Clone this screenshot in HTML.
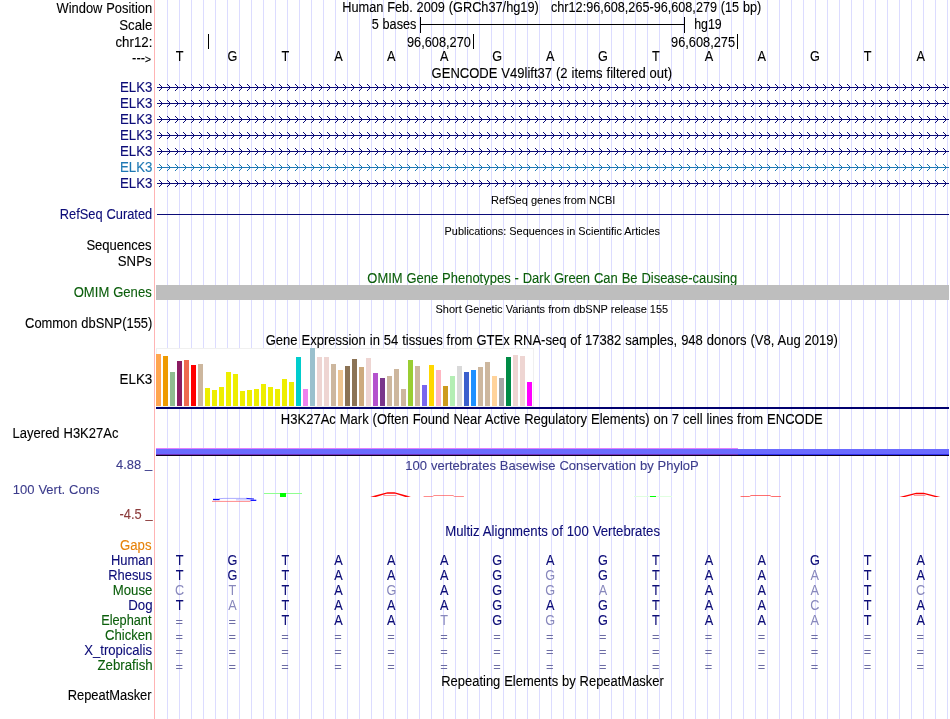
<!DOCTYPE html>
<html lang="en"><head><meta charset="utf-8"><title>UCSC Genome Browser - hg19 chr12:96,608,265-96,608,279</title>
<style>html,body{margin:0;padding:0;background:#fff;overflow:hidden;}svg{display:block;will-change:transform;}text{font-family:"Liberation Sans", Arial, Helvetica, sans-serif;font-size:13px;color:#000;fill:currentColor;stroke:currentColor;stroke-width:.1px;letter-spacing:0;word-spacing:0.3px;}.s{font-size:11px;letter-spacing:0;word-spacing:0;stroke-width:.06px;}.r{text-anchor:end;}.c{text-anchor:middle;}.nv{color:#0c0c78;}.gr{color:#0b5e0b;}.sb{color:#3c3c8c;}.dr{color:#8c3c3c;}.or{color:#e6820a;}.lt{color:#8888bc;stroke-width:0;}.eq{color:#6c6ca4;stroke-width:0;}</style></head><body>
<svg width="950" height="719" viewBox="0 0 950 719">
<rect width="950" height="719" fill="#fff"/>
<g shape-rendering="crispEdges"><rect x="154" y="0" width="1" height="719" fill="#ffb4b4"/><rect x="167" y="0" width="1" height="719" fill="#dcdcff"/><rect x="179" y="0" width="1" height="719" fill="#dcdcff"/><rect x="191" y="0" width="1" height="719" fill="#dcdcff"/><rect x="203" y="0" width="1" height="719" fill="#dcdcff"/><rect x="215" y="0" width="1" height="719" fill="#dcdcff"/><rect x="227" y="0" width="1" height="719" fill="#dcdcff"/><rect x="239" y="0" width="1" height="719" fill="#dcdcff"/><rect x="251" y="0" width="1" height="719" fill="#dcdcff"/><rect x="263" y="0" width="1" height="719" fill="#dcdcff"/><rect x="275" y="0" width="1" height="719" fill="#dcdcff"/><rect x="287" y="0" width="1" height="719" fill="#dcdcff"/><rect x="299" y="0" width="1" height="719" fill="#dcdcff"/><rect x="311" y="0" width="1" height="719" fill="#dcdcff"/><rect x="323" y="0" width="1" height="719" fill="#dcdcff"/><rect x="335" y="0" width="1" height="719" fill="#dcdcff"/><rect x="347" y="0" width="1" height="719" fill="#dcdcff"/><rect x="359" y="0" width="1" height="719" fill="#dcdcff"/><rect x="371" y="0" width="1" height="719" fill="#dcdcff"/><rect x="383" y="0" width="1" height="719" fill="#dcdcff"/><rect x="395" y="0" width="1" height="719" fill="#dcdcff"/><rect x="407" y="0" width="1" height="719" fill="#dcdcff"/><rect x="419" y="0" width="1" height="719" fill="#dcdcff"/><rect x="431" y="0" width="1" height="719" fill="#dcdcff"/><rect x="443" y="0" width="1" height="719" fill="#dcdcff"/><rect x="455" y="0" width="1" height="719" fill="#dcdcff"/><rect x="467" y="0" width="1" height="719" fill="#dcdcff"/><rect x="479" y="0" width="1" height="719" fill="#dcdcff"/><rect x="491" y="0" width="1" height="719" fill="#dcdcff"/><rect x="503" y="0" width="1" height="719" fill="#dcdcff"/><rect x="515" y="0" width="1" height="719" fill="#dcdcff"/><rect x="527" y="0" width="1" height="719" fill="#dcdcff"/><rect x="539" y="0" width="1" height="719" fill="#dcdcff"/><rect x="551" y="0" width="1" height="719" fill="#dcdcff"/><rect x="563" y="0" width="1" height="719" fill="#dcdcff"/><rect x="575" y="0" width="1" height="719" fill="#dcdcff"/><rect x="587" y="0" width="1" height="719" fill="#dcdcff"/><rect x="599" y="0" width="1" height="719" fill="#dcdcff"/><rect x="611" y="0" width="1" height="719" fill="#dcdcff"/><rect x="623" y="0" width="1" height="719" fill="#dcdcff"/><rect x="635" y="0" width="1" height="719" fill="#dcdcff"/><rect x="647" y="0" width="1" height="719" fill="#dcdcff"/><rect x="659" y="0" width="1" height="719" fill="#dcdcff"/><rect x="671" y="0" width="1" height="719" fill="#dcdcff"/><rect x="683" y="0" width="1" height="719" fill="#dcdcff"/><rect x="695" y="0" width="1" height="719" fill="#dcdcff"/><rect x="707" y="0" width="1" height="719" fill="#dcdcff"/><rect x="719" y="0" width="1" height="719" fill="#dcdcff"/><rect x="731" y="0" width="1" height="719" fill="#dcdcff"/><rect x="743" y="0" width="1" height="719" fill="#dcdcff"/><rect x="755" y="0" width="1" height="719" fill="#dcdcff"/><rect x="767" y="0" width="1" height="719" fill="#dcdcff"/><rect x="779" y="0" width="1" height="719" fill="#dcdcff"/><rect x="791" y="0" width="1" height="719" fill="#dcdcff"/><rect x="803" y="0" width="1" height="719" fill="#dcdcff"/><rect x="815" y="0" width="1" height="719" fill="#dcdcff"/><rect x="827" y="0" width="1" height="719" fill="#dcdcff"/><rect x="839" y="0" width="1" height="719" fill="#dcdcff"/><rect x="851" y="0" width="1" height="719" fill="#dcdcff"/><rect x="863" y="0" width="1" height="719" fill="#dcdcff"/><rect x="875" y="0" width="1" height="719" fill="#dcdcff"/><rect x="887" y="0" width="1" height="719" fill="#dcdcff"/><rect x="899" y="0" width="1" height="719" fill="#dcdcff"/><rect x="911" y="0" width="1" height="719" fill="#dcdcff"/><rect x="923" y="0" width="1" height="719" fill="#dcdcff"/><rect x="935" y="0" width="1" height="719" fill="#dcdcff"/><rect x="947" y="0" width="1" height="719" fill="#dcdcff"/></g>
<text transform="translate(152.17 13) scale(0.9928 1.06)" class="r">Window Position</text>
<text transform="translate(152.38 30) scale(1.0207 1.06)" class="r">Scale</text>
<text transform="translate(152.35 47) scale(1.0211 1.06)" class="r">chr12:</text>
<text transform="translate(151.05 63) scale(0.9912 1.06)" class="r">---<tspan font-size="10.5">&gt;</tspan></text>
<text transform="translate(152.43 92) scale(1.0219 1.06)" class="r nv">ELK3</text>
<text transform="translate(152.43 108) scale(1.0219 1.06)" class="r nv">ELK3</text>
<text transform="translate(152.43 124) scale(1.0219 1.06)" class="r nv">ELK3</text>
<text transform="translate(152.43 140) scale(1.0219 1.06)" class="r nv">ELK3</text>
<text transform="translate(152.43 156) scale(1.0219 1.06)" class="r nv">ELK3</text>
<text transform="translate(152.43 172) scale(1.0219 1.06)" class="r" style="color:#1e78b4">ELK3</text>
<text transform="translate(152.43 188) scale(1.0219 1.06)" class="r nv">ELK3</text>
<text transform="translate(152.21 219) scale(0.9886 1.06)" class="r nv">RefSeq Curated</text>
<text transform="translate(151.58 250) scale(1.0024 1.06)" class="r">Sequences</text>
<text transform="translate(151.58 266) scale(1.0168 1.06)" class="r">SNPs</text>
<text transform="translate(151.69 297) scale(1.0055 1.06)" class="r gr">OMIM Genes</text>
<text transform="translate(152.35 328) scale(0.9938 1.06)" class="r">Common dbSNP(155)</text>
<text transform="translate(152.32 384) scale(1.0311 1.06)" class="r">ELK3</text>
<text transform="translate(12.61 438) scale(1.0007 1.06)">Layered H3K27Ac</text>
<text transform="translate(152.28 469) scale(0.9944 1)" class="r sb">4.88 <tspan dy="-0.9">_</tspan></text>
<text transform="translate(12.79 494) scale(1.0001 1)" class="sb">100 Vert. Cons</text>
<text transform="translate(152.73 519.4) scale(0.9896 1.06)" class="r dr">-4.5 <tspan dy="-1.3">_</tspan></text>
<text transform="translate(151.48 550) scale(1.0144 1.06)" class="r or">Gaps</text>
<text transform="translate(152.73 565) scale(0.996 1.06)" class="r nv">Human</text>
<text transform="translate(152.0 580) scale(0.9938 1.06)" class="r nv">Rhesus</text>
<text transform="translate(152.35 595) scale(1.016 1.06)" class="r gr">Mouse</text>
<text transform="translate(152.53 610) scale(1.021 1.06)" class="r nv">Dog</text>
<text transform="translate(151.51 625) scale(0.9826 1.06)" class="r gr">Elephant</text>
<text transform="translate(152.35 640) scale(1.0095 1.06)" class="r gr">Chicken</text>
<text transform="translate(151.97 655) scale(1.0072 1.06)" class="r nv">X_tropicalis</text>
<text transform="translate(152.63 670) scale(1.0191 1.06)" class="r gr">Zebrafish</text>
<text transform="translate(151.58 700) scale(0.993 1.06)" class="r">RepeatMasker</text>
<text transform="translate(342.22 12) scale(0.9827 1.06)">Human Feb. 2009 (GRCh37/hg19)</text>
<text transform="translate(551.0 12) scale(0.9742 1.06)">chr12:96,608,265-96,608,279 (15 bp)</text>
<text transform="translate(551.79 78) scale(1.0027 1.06)" class="c">GENCODE V49lift37 (2 items filtered out)</text>
<text transform="translate(553.25 204) scale(1.003 1)" class="c s">RefSeq genes from NCBI</text>
<text transform="translate(552.32 235) scale(0.9908 1)" class="c s">Publications: Sequences in Scientific Articles</text>
<text transform="translate(552.28 283) scale(0.9981 1.06)" class="c gr">OMIM Gene Phenotypes - Dark Green Can Be Disease-causing</text>
<text transform="translate(551.79 313) scale(0.9986 1)" class="c s">Short Genetic Variants from dbSNP release 155</text>
<text transform="translate(551.79 345) scale(1.0018 1.06)" class="c">Gene Expression in 54 tissues from GTEx RNA-seq of 17382 samples, 948 donors (V8, Aug 2019)</text>
<text transform="translate(551.79 424) scale(1.0021 1.06)" class="c">H3K27Ac Mark (Often Found Near Active Regulatory Elements) on 7 cell lines from ENCODE</text>
<text transform="translate(552.04 470) scale(1.0002 1)" class="c sb">100 vertebrates Basewise Conservation by PhyloP</text>
<text transform="translate(552.6 536) scale(1.0125 1.06)" class="c nv">Multiz Alignments of 100 Vertebrates</text>
<text transform="translate(552.52 686) scale(0.9973 1.06)" class="c">Repeating Elements by RepeatMasker</text>
<text transform="translate(416.4 29.3) scale(0.976 1.06)" class="r">5 bases</text>
<g shape-rendering="crispEdges" fill="#000"><rect x="420" y="24" width="265" height="1"/><rect x="420" y="17" width="1" height="16"/><rect x="684" y="17" width="1" height="16"/></g>
<text transform="translate(694.2 29) scale(0.976 1.06)" textLength="28.18" lengthAdjust="spacingAndGlyphs">hg19</text>
<g shape-rendering="crispEdges" fill="#000"><rect x="208" y="34" width="1" height="15"/><rect x="473" y="34" width="1" height="15"/><rect x="737" y="34" width="1" height="15"/></g>
<text transform="translate(470.9 46.5) scale(0.976 1.06)" class="r" textLength="65.47" lengthAdjust="spacingAndGlyphs">96,608,270</text>
<text transform="translate(735 46.5) scale(0.976 1.06)" class="r" textLength="65.47" lengthAdjust="spacingAndGlyphs">96,608,275</text>
<text transform="translate(179.6 61) scale(0.976 1.06)" class="c">T</text>
<text transform="translate(232.5 61) scale(0.976 1.06)" class="c">G</text>
<text transform="translate(285.4 61) scale(0.976 1.06)" class="c">T</text>
<text transform="translate(338.4 61) scale(0.976 1.06)" class="c">A</text>
<text transform="translate(391.3 61) scale(0.976 1.06)" class="c">A</text>
<text transform="translate(444.2 61) scale(0.976 1.06)" class="c">A</text>
<text transform="translate(497.2 61) scale(0.976 1.06)" class="c">G</text>
<text transform="translate(550.1 61) scale(0.976 1.06)" class="c">A</text>
<text transform="translate(603.0 61) scale(0.976 1.06)" class="c">G</text>
<text transform="translate(656.0 61) scale(0.976 1.06)" class="c">T</text>
<text transform="translate(708.9 61) scale(0.976 1.06)" class="c">A</text>
<text transform="translate(761.8 61) scale(0.976 1.06)" class="c">A</text>
<text transform="translate(814.8 61) scale(0.976 1.06)" class="c">G</text>
<text transform="translate(867.7 61) scale(0.976 1.06)" class="c">T</text>
<text transform="translate(920.6 61) scale(0.976 1.06)" class="c">A</text>
<g shape-rendering="crispEdges"><rect x="157" y="87" width="792" height="1" fill="#0c0c78"/><path d="M161 86h1v1h-1zM161 88h1v1h-1zM160 85h1v1h-1zM160 89h1v1h-1zM159 84h1v1h-1zM159 90h1v1h-1zM169 86h1v1h-1zM169 88h1v1h-1zM168 85h1v1h-1zM168 89h1v1h-1zM167 84h1v1h-1zM167 90h1v1h-1zM177 86h1v1h-1zM177 88h1v1h-1zM176 85h1v1h-1zM176 89h1v1h-1zM175 84h1v1h-1zM175 90h1v1h-1zM185 86h1v1h-1zM185 88h1v1h-1zM184 85h1v1h-1zM184 89h1v1h-1zM183 84h1v1h-1zM183 90h1v1h-1zM193 86h1v1h-1zM193 88h1v1h-1zM192 85h1v1h-1zM192 89h1v1h-1zM191 84h1v1h-1zM191 90h1v1h-1zM201 86h1v1h-1zM201 88h1v1h-1zM200 85h1v1h-1zM200 89h1v1h-1zM199 84h1v1h-1zM199 90h1v1h-1zM209 86h1v1h-1zM209 88h1v1h-1zM208 85h1v1h-1zM208 89h1v1h-1zM207 84h1v1h-1zM207 90h1v1h-1zM217 86h1v1h-1zM217 88h1v1h-1zM216 85h1v1h-1zM216 89h1v1h-1zM215 84h1v1h-1zM215 90h1v1h-1zM225 86h1v1h-1zM225 88h1v1h-1zM224 85h1v1h-1zM224 89h1v1h-1zM223 84h1v1h-1zM223 90h1v1h-1zM233 86h1v1h-1zM233 88h1v1h-1zM232 85h1v1h-1zM232 89h1v1h-1zM231 84h1v1h-1zM231 90h1v1h-1zM241 86h1v1h-1zM241 88h1v1h-1zM240 85h1v1h-1zM240 89h1v1h-1zM239 84h1v1h-1zM239 90h1v1h-1zM249 86h1v1h-1zM249 88h1v1h-1zM248 85h1v1h-1zM248 89h1v1h-1zM247 84h1v1h-1zM247 90h1v1h-1zM257 86h1v1h-1zM257 88h1v1h-1zM256 85h1v1h-1zM256 89h1v1h-1zM255 84h1v1h-1zM255 90h1v1h-1zM265 86h1v1h-1zM265 88h1v1h-1zM264 85h1v1h-1zM264 89h1v1h-1zM263 84h1v1h-1zM263 90h1v1h-1zM273 86h1v1h-1zM273 88h1v1h-1zM272 85h1v1h-1zM272 89h1v1h-1zM271 84h1v1h-1zM271 90h1v1h-1zM281 86h1v1h-1zM281 88h1v1h-1zM280 85h1v1h-1zM280 89h1v1h-1zM279 84h1v1h-1zM279 90h1v1h-1zM289 86h1v1h-1zM289 88h1v1h-1zM288 85h1v1h-1zM288 89h1v1h-1zM287 84h1v1h-1zM287 90h1v1h-1zM297 86h1v1h-1zM297 88h1v1h-1zM296 85h1v1h-1zM296 89h1v1h-1zM295 84h1v1h-1zM295 90h1v1h-1zM305 86h1v1h-1zM305 88h1v1h-1zM304 85h1v1h-1zM304 89h1v1h-1zM303 84h1v1h-1zM303 90h1v1h-1zM313 86h1v1h-1zM313 88h1v1h-1zM312 85h1v1h-1zM312 89h1v1h-1zM311 84h1v1h-1zM311 90h1v1h-1zM321 86h1v1h-1zM321 88h1v1h-1zM320 85h1v1h-1zM320 89h1v1h-1zM319 84h1v1h-1zM319 90h1v1h-1zM329 86h1v1h-1zM329 88h1v1h-1zM328 85h1v1h-1zM328 89h1v1h-1zM327 84h1v1h-1zM327 90h1v1h-1zM337 86h1v1h-1zM337 88h1v1h-1zM336 85h1v1h-1zM336 89h1v1h-1zM335 84h1v1h-1zM335 90h1v1h-1zM345 86h1v1h-1zM345 88h1v1h-1zM344 85h1v1h-1zM344 89h1v1h-1zM343 84h1v1h-1zM343 90h1v1h-1zM353 86h1v1h-1zM353 88h1v1h-1zM352 85h1v1h-1zM352 89h1v1h-1zM351 84h1v1h-1zM351 90h1v1h-1zM361 86h1v1h-1zM361 88h1v1h-1zM360 85h1v1h-1zM360 89h1v1h-1zM359 84h1v1h-1zM359 90h1v1h-1zM369 86h1v1h-1zM369 88h1v1h-1zM368 85h1v1h-1zM368 89h1v1h-1zM367 84h1v1h-1zM367 90h1v1h-1zM377 86h1v1h-1zM377 88h1v1h-1zM376 85h1v1h-1zM376 89h1v1h-1zM375 84h1v1h-1zM375 90h1v1h-1zM385 86h1v1h-1zM385 88h1v1h-1zM384 85h1v1h-1zM384 89h1v1h-1zM383 84h1v1h-1zM383 90h1v1h-1zM393 86h1v1h-1zM393 88h1v1h-1zM392 85h1v1h-1zM392 89h1v1h-1zM391 84h1v1h-1zM391 90h1v1h-1zM401 86h1v1h-1zM401 88h1v1h-1zM400 85h1v1h-1zM400 89h1v1h-1zM399 84h1v1h-1zM399 90h1v1h-1zM409 86h1v1h-1zM409 88h1v1h-1zM408 85h1v1h-1zM408 89h1v1h-1zM407 84h1v1h-1zM407 90h1v1h-1zM417 86h1v1h-1zM417 88h1v1h-1zM416 85h1v1h-1zM416 89h1v1h-1zM415 84h1v1h-1zM415 90h1v1h-1zM425 86h1v1h-1zM425 88h1v1h-1zM424 85h1v1h-1zM424 89h1v1h-1zM423 84h1v1h-1zM423 90h1v1h-1zM433 86h1v1h-1zM433 88h1v1h-1zM432 85h1v1h-1zM432 89h1v1h-1zM431 84h1v1h-1zM431 90h1v1h-1zM441 86h1v1h-1zM441 88h1v1h-1zM440 85h1v1h-1zM440 89h1v1h-1zM439 84h1v1h-1zM439 90h1v1h-1zM449 86h1v1h-1zM449 88h1v1h-1zM448 85h1v1h-1zM448 89h1v1h-1zM447 84h1v1h-1zM447 90h1v1h-1zM457 86h1v1h-1zM457 88h1v1h-1zM456 85h1v1h-1zM456 89h1v1h-1zM455 84h1v1h-1zM455 90h1v1h-1zM465 86h1v1h-1zM465 88h1v1h-1zM464 85h1v1h-1zM464 89h1v1h-1zM463 84h1v1h-1zM463 90h1v1h-1zM473 86h1v1h-1zM473 88h1v1h-1zM472 85h1v1h-1zM472 89h1v1h-1zM471 84h1v1h-1zM471 90h1v1h-1zM481 86h1v1h-1zM481 88h1v1h-1zM480 85h1v1h-1zM480 89h1v1h-1zM479 84h1v1h-1zM479 90h1v1h-1zM489 86h1v1h-1zM489 88h1v1h-1zM488 85h1v1h-1zM488 89h1v1h-1zM487 84h1v1h-1zM487 90h1v1h-1zM497 86h1v1h-1zM497 88h1v1h-1zM496 85h1v1h-1zM496 89h1v1h-1zM495 84h1v1h-1zM495 90h1v1h-1zM505 86h1v1h-1zM505 88h1v1h-1zM504 85h1v1h-1zM504 89h1v1h-1zM503 84h1v1h-1zM503 90h1v1h-1zM513 86h1v1h-1zM513 88h1v1h-1zM512 85h1v1h-1zM512 89h1v1h-1zM511 84h1v1h-1zM511 90h1v1h-1zM521 86h1v1h-1zM521 88h1v1h-1zM520 85h1v1h-1zM520 89h1v1h-1zM519 84h1v1h-1zM519 90h1v1h-1zM529 86h1v1h-1zM529 88h1v1h-1zM528 85h1v1h-1zM528 89h1v1h-1zM527 84h1v1h-1zM527 90h1v1h-1zM537 86h1v1h-1zM537 88h1v1h-1zM536 85h1v1h-1zM536 89h1v1h-1zM535 84h1v1h-1zM535 90h1v1h-1zM545 86h1v1h-1zM545 88h1v1h-1zM544 85h1v1h-1zM544 89h1v1h-1zM543 84h1v1h-1zM543 90h1v1h-1zM553 86h1v1h-1zM553 88h1v1h-1zM552 85h1v1h-1zM552 89h1v1h-1zM551 84h1v1h-1zM551 90h1v1h-1zM561 86h1v1h-1zM561 88h1v1h-1zM560 85h1v1h-1zM560 89h1v1h-1zM559 84h1v1h-1zM559 90h1v1h-1zM569 86h1v1h-1zM569 88h1v1h-1zM568 85h1v1h-1zM568 89h1v1h-1zM567 84h1v1h-1zM567 90h1v1h-1zM577 86h1v1h-1zM577 88h1v1h-1zM576 85h1v1h-1zM576 89h1v1h-1zM575 84h1v1h-1zM575 90h1v1h-1zM585 86h1v1h-1zM585 88h1v1h-1zM584 85h1v1h-1zM584 89h1v1h-1zM583 84h1v1h-1zM583 90h1v1h-1zM593 86h1v1h-1zM593 88h1v1h-1zM592 85h1v1h-1zM592 89h1v1h-1zM591 84h1v1h-1zM591 90h1v1h-1zM601 86h1v1h-1zM601 88h1v1h-1zM600 85h1v1h-1zM600 89h1v1h-1zM599 84h1v1h-1zM599 90h1v1h-1zM609 86h1v1h-1zM609 88h1v1h-1zM608 85h1v1h-1zM608 89h1v1h-1zM607 84h1v1h-1zM607 90h1v1h-1zM617 86h1v1h-1zM617 88h1v1h-1zM616 85h1v1h-1zM616 89h1v1h-1zM615 84h1v1h-1zM615 90h1v1h-1zM625 86h1v1h-1zM625 88h1v1h-1zM624 85h1v1h-1zM624 89h1v1h-1zM623 84h1v1h-1zM623 90h1v1h-1zM633 86h1v1h-1zM633 88h1v1h-1zM632 85h1v1h-1zM632 89h1v1h-1zM631 84h1v1h-1zM631 90h1v1h-1zM641 86h1v1h-1zM641 88h1v1h-1zM640 85h1v1h-1zM640 89h1v1h-1zM639 84h1v1h-1zM639 90h1v1h-1zM649 86h1v1h-1zM649 88h1v1h-1zM648 85h1v1h-1zM648 89h1v1h-1zM647 84h1v1h-1zM647 90h1v1h-1zM657 86h1v1h-1zM657 88h1v1h-1zM656 85h1v1h-1zM656 89h1v1h-1zM655 84h1v1h-1zM655 90h1v1h-1zM665 86h1v1h-1zM665 88h1v1h-1zM664 85h1v1h-1zM664 89h1v1h-1zM663 84h1v1h-1zM663 90h1v1h-1zM673 86h1v1h-1zM673 88h1v1h-1zM672 85h1v1h-1zM672 89h1v1h-1zM671 84h1v1h-1zM671 90h1v1h-1zM681 86h1v1h-1zM681 88h1v1h-1zM680 85h1v1h-1zM680 89h1v1h-1zM679 84h1v1h-1zM679 90h1v1h-1zM689 86h1v1h-1zM689 88h1v1h-1zM688 85h1v1h-1zM688 89h1v1h-1zM687 84h1v1h-1zM687 90h1v1h-1zM697 86h1v1h-1zM697 88h1v1h-1zM696 85h1v1h-1zM696 89h1v1h-1zM695 84h1v1h-1zM695 90h1v1h-1zM705 86h1v1h-1zM705 88h1v1h-1zM704 85h1v1h-1zM704 89h1v1h-1zM703 84h1v1h-1zM703 90h1v1h-1zM713 86h1v1h-1zM713 88h1v1h-1zM712 85h1v1h-1zM712 89h1v1h-1zM711 84h1v1h-1zM711 90h1v1h-1zM721 86h1v1h-1zM721 88h1v1h-1zM720 85h1v1h-1zM720 89h1v1h-1zM719 84h1v1h-1zM719 90h1v1h-1zM729 86h1v1h-1zM729 88h1v1h-1zM728 85h1v1h-1zM728 89h1v1h-1zM727 84h1v1h-1zM727 90h1v1h-1zM737 86h1v1h-1zM737 88h1v1h-1zM736 85h1v1h-1zM736 89h1v1h-1zM735 84h1v1h-1zM735 90h1v1h-1zM745 86h1v1h-1zM745 88h1v1h-1zM744 85h1v1h-1zM744 89h1v1h-1zM743 84h1v1h-1zM743 90h1v1h-1zM753 86h1v1h-1zM753 88h1v1h-1zM752 85h1v1h-1zM752 89h1v1h-1zM751 84h1v1h-1zM751 90h1v1h-1zM761 86h1v1h-1zM761 88h1v1h-1zM760 85h1v1h-1zM760 89h1v1h-1zM759 84h1v1h-1zM759 90h1v1h-1zM769 86h1v1h-1zM769 88h1v1h-1zM768 85h1v1h-1zM768 89h1v1h-1zM767 84h1v1h-1zM767 90h1v1h-1zM777 86h1v1h-1zM777 88h1v1h-1zM776 85h1v1h-1zM776 89h1v1h-1zM775 84h1v1h-1zM775 90h1v1h-1zM785 86h1v1h-1zM785 88h1v1h-1zM784 85h1v1h-1zM784 89h1v1h-1zM783 84h1v1h-1zM783 90h1v1h-1zM793 86h1v1h-1zM793 88h1v1h-1zM792 85h1v1h-1zM792 89h1v1h-1zM791 84h1v1h-1zM791 90h1v1h-1zM801 86h1v1h-1zM801 88h1v1h-1zM800 85h1v1h-1zM800 89h1v1h-1zM799 84h1v1h-1zM799 90h1v1h-1zM809 86h1v1h-1zM809 88h1v1h-1zM808 85h1v1h-1zM808 89h1v1h-1zM807 84h1v1h-1zM807 90h1v1h-1zM817 86h1v1h-1zM817 88h1v1h-1zM816 85h1v1h-1zM816 89h1v1h-1zM815 84h1v1h-1zM815 90h1v1h-1zM825 86h1v1h-1zM825 88h1v1h-1zM824 85h1v1h-1zM824 89h1v1h-1zM823 84h1v1h-1zM823 90h1v1h-1zM833 86h1v1h-1zM833 88h1v1h-1zM832 85h1v1h-1zM832 89h1v1h-1zM831 84h1v1h-1zM831 90h1v1h-1zM841 86h1v1h-1zM841 88h1v1h-1zM840 85h1v1h-1zM840 89h1v1h-1zM839 84h1v1h-1zM839 90h1v1h-1zM849 86h1v1h-1zM849 88h1v1h-1zM848 85h1v1h-1zM848 89h1v1h-1zM847 84h1v1h-1zM847 90h1v1h-1zM857 86h1v1h-1zM857 88h1v1h-1zM856 85h1v1h-1zM856 89h1v1h-1zM855 84h1v1h-1zM855 90h1v1h-1zM865 86h1v1h-1zM865 88h1v1h-1zM864 85h1v1h-1zM864 89h1v1h-1zM863 84h1v1h-1zM863 90h1v1h-1zM873 86h1v1h-1zM873 88h1v1h-1zM872 85h1v1h-1zM872 89h1v1h-1zM871 84h1v1h-1zM871 90h1v1h-1zM881 86h1v1h-1zM881 88h1v1h-1zM880 85h1v1h-1zM880 89h1v1h-1zM879 84h1v1h-1zM879 90h1v1h-1zM889 86h1v1h-1zM889 88h1v1h-1zM888 85h1v1h-1zM888 89h1v1h-1zM887 84h1v1h-1zM887 90h1v1h-1zM897 86h1v1h-1zM897 88h1v1h-1zM896 85h1v1h-1zM896 89h1v1h-1zM895 84h1v1h-1zM895 90h1v1h-1zM905 86h1v1h-1zM905 88h1v1h-1zM904 85h1v1h-1zM904 89h1v1h-1zM903 84h1v1h-1zM903 90h1v1h-1zM913 86h1v1h-1zM913 88h1v1h-1zM912 85h1v1h-1zM912 89h1v1h-1zM911 84h1v1h-1zM911 90h1v1h-1zM921 86h1v1h-1zM921 88h1v1h-1zM920 85h1v1h-1zM920 89h1v1h-1zM919 84h1v1h-1zM919 90h1v1h-1zM929 86h1v1h-1zM929 88h1v1h-1zM928 85h1v1h-1zM928 89h1v1h-1zM927 84h1v1h-1zM927 90h1v1h-1zM937 86h1v1h-1zM937 88h1v1h-1zM936 85h1v1h-1zM936 89h1v1h-1zM935 84h1v1h-1zM935 90h1v1h-1zM945 86h1v1h-1zM945 88h1v1h-1zM944 85h1v1h-1zM944 89h1v1h-1zM943 84h1v1h-1zM943 90h1v1h-1z" fill="#0c0c78"/><rect x="157" y="103" width="792" height="1" fill="#0c0c78"/><path d="M161 102h1v1h-1zM161 104h1v1h-1zM160 101h1v1h-1zM160 105h1v1h-1zM159 100h1v1h-1zM159 106h1v1h-1zM169 102h1v1h-1zM169 104h1v1h-1zM168 101h1v1h-1zM168 105h1v1h-1zM167 100h1v1h-1zM167 106h1v1h-1zM177 102h1v1h-1zM177 104h1v1h-1zM176 101h1v1h-1zM176 105h1v1h-1zM175 100h1v1h-1zM175 106h1v1h-1zM185 102h1v1h-1zM185 104h1v1h-1zM184 101h1v1h-1zM184 105h1v1h-1zM183 100h1v1h-1zM183 106h1v1h-1zM193 102h1v1h-1zM193 104h1v1h-1zM192 101h1v1h-1zM192 105h1v1h-1zM191 100h1v1h-1zM191 106h1v1h-1zM201 102h1v1h-1zM201 104h1v1h-1zM200 101h1v1h-1zM200 105h1v1h-1zM199 100h1v1h-1zM199 106h1v1h-1zM209 102h1v1h-1zM209 104h1v1h-1zM208 101h1v1h-1zM208 105h1v1h-1zM207 100h1v1h-1zM207 106h1v1h-1zM217 102h1v1h-1zM217 104h1v1h-1zM216 101h1v1h-1zM216 105h1v1h-1zM215 100h1v1h-1zM215 106h1v1h-1zM225 102h1v1h-1zM225 104h1v1h-1zM224 101h1v1h-1zM224 105h1v1h-1zM223 100h1v1h-1zM223 106h1v1h-1zM233 102h1v1h-1zM233 104h1v1h-1zM232 101h1v1h-1zM232 105h1v1h-1zM231 100h1v1h-1zM231 106h1v1h-1zM241 102h1v1h-1zM241 104h1v1h-1zM240 101h1v1h-1zM240 105h1v1h-1zM239 100h1v1h-1zM239 106h1v1h-1zM249 102h1v1h-1zM249 104h1v1h-1zM248 101h1v1h-1zM248 105h1v1h-1zM247 100h1v1h-1zM247 106h1v1h-1zM257 102h1v1h-1zM257 104h1v1h-1zM256 101h1v1h-1zM256 105h1v1h-1zM255 100h1v1h-1zM255 106h1v1h-1zM265 102h1v1h-1zM265 104h1v1h-1zM264 101h1v1h-1zM264 105h1v1h-1zM263 100h1v1h-1zM263 106h1v1h-1zM273 102h1v1h-1zM273 104h1v1h-1zM272 101h1v1h-1zM272 105h1v1h-1zM271 100h1v1h-1zM271 106h1v1h-1zM281 102h1v1h-1zM281 104h1v1h-1zM280 101h1v1h-1zM280 105h1v1h-1zM279 100h1v1h-1zM279 106h1v1h-1zM289 102h1v1h-1zM289 104h1v1h-1zM288 101h1v1h-1zM288 105h1v1h-1zM287 100h1v1h-1zM287 106h1v1h-1zM297 102h1v1h-1zM297 104h1v1h-1zM296 101h1v1h-1zM296 105h1v1h-1zM295 100h1v1h-1zM295 106h1v1h-1zM305 102h1v1h-1zM305 104h1v1h-1zM304 101h1v1h-1zM304 105h1v1h-1zM303 100h1v1h-1zM303 106h1v1h-1zM313 102h1v1h-1zM313 104h1v1h-1zM312 101h1v1h-1zM312 105h1v1h-1zM311 100h1v1h-1zM311 106h1v1h-1zM321 102h1v1h-1zM321 104h1v1h-1zM320 101h1v1h-1zM320 105h1v1h-1zM319 100h1v1h-1zM319 106h1v1h-1zM329 102h1v1h-1zM329 104h1v1h-1zM328 101h1v1h-1zM328 105h1v1h-1zM327 100h1v1h-1zM327 106h1v1h-1zM337 102h1v1h-1zM337 104h1v1h-1zM336 101h1v1h-1zM336 105h1v1h-1zM335 100h1v1h-1zM335 106h1v1h-1zM345 102h1v1h-1zM345 104h1v1h-1zM344 101h1v1h-1zM344 105h1v1h-1zM343 100h1v1h-1zM343 106h1v1h-1zM353 102h1v1h-1zM353 104h1v1h-1zM352 101h1v1h-1zM352 105h1v1h-1zM351 100h1v1h-1zM351 106h1v1h-1zM361 102h1v1h-1zM361 104h1v1h-1zM360 101h1v1h-1zM360 105h1v1h-1zM359 100h1v1h-1zM359 106h1v1h-1zM369 102h1v1h-1zM369 104h1v1h-1zM368 101h1v1h-1zM368 105h1v1h-1zM367 100h1v1h-1zM367 106h1v1h-1zM377 102h1v1h-1zM377 104h1v1h-1zM376 101h1v1h-1zM376 105h1v1h-1zM375 100h1v1h-1zM375 106h1v1h-1zM385 102h1v1h-1zM385 104h1v1h-1zM384 101h1v1h-1zM384 105h1v1h-1zM383 100h1v1h-1zM383 106h1v1h-1zM393 102h1v1h-1zM393 104h1v1h-1zM392 101h1v1h-1zM392 105h1v1h-1zM391 100h1v1h-1zM391 106h1v1h-1zM401 102h1v1h-1zM401 104h1v1h-1zM400 101h1v1h-1zM400 105h1v1h-1zM399 100h1v1h-1zM399 106h1v1h-1zM409 102h1v1h-1zM409 104h1v1h-1zM408 101h1v1h-1zM408 105h1v1h-1zM407 100h1v1h-1zM407 106h1v1h-1zM417 102h1v1h-1zM417 104h1v1h-1zM416 101h1v1h-1zM416 105h1v1h-1zM415 100h1v1h-1zM415 106h1v1h-1zM425 102h1v1h-1zM425 104h1v1h-1zM424 101h1v1h-1zM424 105h1v1h-1zM423 100h1v1h-1zM423 106h1v1h-1zM433 102h1v1h-1zM433 104h1v1h-1zM432 101h1v1h-1zM432 105h1v1h-1zM431 100h1v1h-1zM431 106h1v1h-1zM441 102h1v1h-1zM441 104h1v1h-1zM440 101h1v1h-1zM440 105h1v1h-1zM439 100h1v1h-1zM439 106h1v1h-1zM449 102h1v1h-1zM449 104h1v1h-1zM448 101h1v1h-1zM448 105h1v1h-1zM447 100h1v1h-1zM447 106h1v1h-1zM457 102h1v1h-1zM457 104h1v1h-1zM456 101h1v1h-1zM456 105h1v1h-1zM455 100h1v1h-1zM455 106h1v1h-1zM465 102h1v1h-1zM465 104h1v1h-1zM464 101h1v1h-1zM464 105h1v1h-1zM463 100h1v1h-1zM463 106h1v1h-1zM473 102h1v1h-1zM473 104h1v1h-1zM472 101h1v1h-1zM472 105h1v1h-1zM471 100h1v1h-1zM471 106h1v1h-1zM481 102h1v1h-1zM481 104h1v1h-1zM480 101h1v1h-1zM480 105h1v1h-1zM479 100h1v1h-1zM479 106h1v1h-1zM489 102h1v1h-1zM489 104h1v1h-1zM488 101h1v1h-1zM488 105h1v1h-1zM487 100h1v1h-1zM487 106h1v1h-1zM497 102h1v1h-1zM497 104h1v1h-1zM496 101h1v1h-1zM496 105h1v1h-1zM495 100h1v1h-1zM495 106h1v1h-1zM505 102h1v1h-1zM505 104h1v1h-1zM504 101h1v1h-1zM504 105h1v1h-1zM503 100h1v1h-1zM503 106h1v1h-1zM513 102h1v1h-1zM513 104h1v1h-1zM512 101h1v1h-1zM512 105h1v1h-1zM511 100h1v1h-1zM511 106h1v1h-1zM521 102h1v1h-1zM521 104h1v1h-1zM520 101h1v1h-1zM520 105h1v1h-1zM519 100h1v1h-1zM519 106h1v1h-1zM529 102h1v1h-1zM529 104h1v1h-1zM528 101h1v1h-1zM528 105h1v1h-1zM527 100h1v1h-1zM527 106h1v1h-1zM537 102h1v1h-1zM537 104h1v1h-1zM536 101h1v1h-1zM536 105h1v1h-1zM535 100h1v1h-1zM535 106h1v1h-1zM545 102h1v1h-1zM545 104h1v1h-1zM544 101h1v1h-1zM544 105h1v1h-1zM543 100h1v1h-1zM543 106h1v1h-1zM553 102h1v1h-1zM553 104h1v1h-1zM552 101h1v1h-1zM552 105h1v1h-1zM551 100h1v1h-1zM551 106h1v1h-1zM561 102h1v1h-1zM561 104h1v1h-1zM560 101h1v1h-1zM560 105h1v1h-1zM559 100h1v1h-1zM559 106h1v1h-1zM569 102h1v1h-1zM569 104h1v1h-1zM568 101h1v1h-1zM568 105h1v1h-1zM567 100h1v1h-1zM567 106h1v1h-1zM577 102h1v1h-1zM577 104h1v1h-1zM576 101h1v1h-1zM576 105h1v1h-1zM575 100h1v1h-1zM575 106h1v1h-1zM585 102h1v1h-1zM585 104h1v1h-1zM584 101h1v1h-1zM584 105h1v1h-1zM583 100h1v1h-1zM583 106h1v1h-1zM593 102h1v1h-1zM593 104h1v1h-1zM592 101h1v1h-1zM592 105h1v1h-1zM591 100h1v1h-1zM591 106h1v1h-1zM601 102h1v1h-1zM601 104h1v1h-1zM600 101h1v1h-1zM600 105h1v1h-1zM599 100h1v1h-1zM599 106h1v1h-1zM609 102h1v1h-1zM609 104h1v1h-1zM608 101h1v1h-1zM608 105h1v1h-1zM607 100h1v1h-1zM607 106h1v1h-1zM617 102h1v1h-1zM617 104h1v1h-1zM616 101h1v1h-1zM616 105h1v1h-1zM615 100h1v1h-1zM615 106h1v1h-1zM625 102h1v1h-1zM625 104h1v1h-1zM624 101h1v1h-1zM624 105h1v1h-1zM623 100h1v1h-1zM623 106h1v1h-1zM633 102h1v1h-1zM633 104h1v1h-1zM632 101h1v1h-1zM632 105h1v1h-1zM631 100h1v1h-1zM631 106h1v1h-1zM641 102h1v1h-1zM641 104h1v1h-1zM640 101h1v1h-1zM640 105h1v1h-1zM639 100h1v1h-1zM639 106h1v1h-1zM649 102h1v1h-1zM649 104h1v1h-1zM648 101h1v1h-1zM648 105h1v1h-1zM647 100h1v1h-1zM647 106h1v1h-1zM657 102h1v1h-1zM657 104h1v1h-1zM656 101h1v1h-1zM656 105h1v1h-1zM655 100h1v1h-1zM655 106h1v1h-1zM665 102h1v1h-1zM665 104h1v1h-1zM664 101h1v1h-1zM664 105h1v1h-1zM663 100h1v1h-1zM663 106h1v1h-1zM673 102h1v1h-1zM673 104h1v1h-1zM672 101h1v1h-1zM672 105h1v1h-1zM671 100h1v1h-1zM671 106h1v1h-1zM681 102h1v1h-1zM681 104h1v1h-1zM680 101h1v1h-1zM680 105h1v1h-1zM679 100h1v1h-1zM679 106h1v1h-1zM689 102h1v1h-1zM689 104h1v1h-1zM688 101h1v1h-1zM688 105h1v1h-1zM687 100h1v1h-1zM687 106h1v1h-1zM697 102h1v1h-1zM697 104h1v1h-1zM696 101h1v1h-1zM696 105h1v1h-1zM695 100h1v1h-1zM695 106h1v1h-1zM705 102h1v1h-1zM705 104h1v1h-1zM704 101h1v1h-1zM704 105h1v1h-1zM703 100h1v1h-1zM703 106h1v1h-1zM713 102h1v1h-1zM713 104h1v1h-1zM712 101h1v1h-1zM712 105h1v1h-1zM711 100h1v1h-1zM711 106h1v1h-1zM721 102h1v1h-1zM721 104h1v1h-1zM720 101h1v1h-1zM720 105h1v1h-1zM719 100h1v1h-1zM719 106h1v1h-1zM729 102h1v1h-1zM729 104h1v1h-1zM728 101h1v1h-1zM728 105h1v1h-1zM727 100h1v1h-1zM727 106h1v1h-1zM737 102h1v1h-1zM737 104h1v1h-1zM736 101h1v1h-1zM736 105h1v1h-1zM735 100h1v1h-1zM735 106h1v1h-1zM745 102h1v1h-1zM745 104h1v1h-1zM744 101h1v1h-1zM744 105h1v1h-1zM743 100h1v1h-1zM743 106h1v1h-1zM753 102h1v1h-1zM753 104h1v1h-1zM752 101h1v1h-1zM752 105h1v1h-1zM751 100h1v1h-1zM751 106h1v1h-1zM761 102h1v1h-1zM761 104h1v1h-1zM760 101h1v1h-1zM760 105h1v1h-1zM759 100h1v1h-1zM759 106h1v1h-1zM769 102h1v1h-1zM769 104h1v1h-1zM768 101h1v1h-1zM768 105h1v1h-1zM767 100h1v1h-1zM767 106h1v1h-1zM777 102h1v1h-1zM777 104h1v1h-1zM776 101h1v1h-1zM776 105h1v1h-1zM775 100h1v1h-1zM775 106h1v1h-1zM785 102h1v1h-1zM785 104h1v1h-1zM784 101h1v1h-1zM784 105h1v1h-1zM783 100h1v1h-1zM783 106h1v1h-1zM793 102h1v1h-1zM793 104h1v1h-1zM792 101h1v1h-1zM792 105h1v1h-1zM791 100h1v1h-1zM791 106h1v1h-1zM801 102h1v1h-1zM801 104h1v1h-1zM800 101h1v1h-1zM800 105h1v1h-1zM799 100h1v1h-1zM799 106h1v1h-1zM809 102h1v1h-1zM809 104h1v1h-1zM808 101h1v1h-1zM808 105h1v1h-1zM807 100h1v1h-1zM807 106h1v1h-1zM817 102h1v1h-1zM817 104h1v1h-1zM816 101h1v1h-1zM816 105h1v1h-1zM815 100h1v1h-1zM815 106h1v1h-1zM825 102h1v1h-1zM825 104h1v1h-1zM824 101h1v1h-1zM824 105h1v1h-1zM823 100h1v1h-1zM823 106h1v1h-1zM833 102h1v1h-1zM833 104h1v1h-1zM832 101h1v1h-1zM832 105h1v1h-1zM831 100h1v1h-1zM831 106h1v1h-1zM841 102h1v1h-1zM841 104h1v1h-1zM840 101h1v1h-1zM840 105h1v1h-1zM839 100h1v1h-1zM839 106h1v1h-1zM849 102h1v1h-1zM849 104h1v1h-1zM848 101h1v1h-1zM848 105h1v1h-1zM847 100h1v1h-1zM847 106h1v1h-1zM857 102h1v1h-1zM857 104h1v1h-1zM856 101h1v1h-1zM856 105h1v1h-1zM855 100h1v1h-1zM855 106h1v1h-1zM865 102h1v1h-1zM865 104h1v1h-1zM864 101h1v1h-1zM864 105h1v1h-1zM863 100h1v1h-1zM863 106h1v1h-1zM873 102h1v1h-1zM873 104h1v1h-1zM872 101h1v1h-1zM872 105h1v1h-1zM871 100h1v1h-1zM871 106h1v1h-1zM881 102h1v1h-1zM881 104h1v1h-1zM880 101h1v1h-1zM880 105h1v1h-1zM879 100h1v1h-1zM879 106h1v1h-1zM889 102h1v1h-1zM889 104h1v1h-1zM888 101h1v1h-1zM888 105h1v1h-1zM887 100h1v1h-1zM887 106h1v1h-1zM897 102h1v1h-1zM897 104h1v1h-1zM896 101h1v1h-1zM896 105h1v1h-1zM895 100h1v1h-1zM895 106h1v1h-1zM905 102h1v1h-1zM905 104h1v1h-1zM904 101h1v1h-1zM904 105h1v1h-1zM903 100h1v1h-1zM903 106h1v1h-1zM913 102h1v1h-1zM913 104h1v1h-1zM912 101h1v1h-1zM912 105h1v1h-1zM911 100h1v1h-1zM911 106h1v1h-1zM921 102h1v1h-1zM921 104h1v1h-1zM920 101h1v1h-1zM920 105h1v1h-1zM919 100h1v1h-1zM919 106h1v1h-1zM929 102h1v1h-1zM929 104h1v1h-1zM928 101h1v1h-1zM928 105h1v1h-1zM927 100h1v1h-1zM927 106h1v1h-1zM937 102h1v1h-1zM937 104h1v1h-1zM936 101h1v1h-1zM936 105h1v1h-1zM935 100h1v1h-1zM935 106h1v1h-1zM945 102h1v1h-1zM945 104h1v1h-1zM944 101h1v1h-1zM944 105h1v1h-1zM943 100h1v1h-1zM943 106h1v1h-1z" fill="#0c0c78"/><rect x="157" y="119" width="792" height="1" fill="#0c0c78"/><path d="M161 118h1v1h-1zM161 120h1v1h-1zM160 117h1v1h-1zM160 121h1v1h-1zM159 116h1v1h-1zM159 122h1v1h-1zM169 118h1v1h-1zM169 120h1v1h-1zM168 117h1v1h-1zM168 121h1v1h-1zM167 116h1v1h-1zM167 122h1v1h-1zM177 118h1v1h-1zM177 120h1v1h-1zM176 117h1v1h-1zM176 121h1v1h-1zM175 116h1v1h-1zM175 122h1v1h-1zM185 118h1v1h-1zM185 120h1v1h-1zM184 117h1v1h-1zM184 121h1v1h-1zM183 116h1v1h-1zM183 122h1v1h-1zM193 118h1v1h-1zM193 120h1v1h-1zM192 117h1v1h-1zM192 121h1v1h-1zM191 116h1v1h-1zM191 122h1v1h-1zM201 118h1v1h-1zM201 120h1v1h-1zM200 117h1v1h-1zM200 121h1v1h-1zM199 116h1v1h-1zM199 122h1v1h-1zM209 118h1v1h-1zM209 120h1v1h-1zM208 117h1v1h-1zM208 121h1v1h-1zM207 116h1v1h-1zM207 122h1v1h-1zM217 118h1v1h-1zM217 120h1v1h-1zM216 117h1v1h-1zM216 121h1v1h-1zM215 116h1v1h-1zM215 122h1v1h-1zM225 118h1v1h-1zM225 120h1v1h-1zM224 117h1v1h-1zM224 121h1v1h-1zM223 116h1v1h-1zM223 122h1v1h-1zM233 118h1v1h-1zM233 120h1v1h-1zM232 117h1v1h-1zM232 121h1v1h-1zM231 116h1v1h-1zM231 122h1v1h-1zM241 118h1v1h-1zM241 120h1v1h-1zM240 117h1v1h-1zM240 121h1v1h-1zM239 116h1v1h-1zM239 122h1v1h-1zM249 118h1v1h-1zM249 120h1v1h-1zM248 117h1v1h-1zM248 121h1v1h-1zM247 116h1v1h-1zM247 122h1v1h-1zM257 118h1v1h-1zM257 120h1v1h-1zM256 117h1v1h-1zM256 121h1v1h-1zM255 116h1v1h-1zM255 122h1v1h-1zM265 118h1v1h-1zM265 120h1v1h-1zM264 117h1v1h-1zM264 121h1v1h-1zM263 116h1v1h-1zM263 122h1v1h-1zM273 118h1v1h-1zM273 120h1v1h-1zM272 117h1v1h-1zM272 121h1v1h-1zM271 116h1v1h-1zM271 122h1v1h-1zM281 118h1v1h-1zM281 120h1v1h-1zM280 117h1v1h-1zM280 121h1v1h-1zM279 116h1v1h-1zM279 122h1v1h-1zM289 118h1v1h-1zM289 120h1v1h-1zM288 117h1v1h-1zM288 121h1v1h-1zM287 116h1v1h-1zM287 122h1v1h-1zM297 118h1v1h-1zM297 120h1v1h-1zM296 117h1v1h-1zM296 121h1v1h-1zM295 116h1v1h-1zM295 122h1v1h-1zM305 118h1v1h-1zM305 120h1v1h-1zM304 117h1v1h-1zM304 121h1v1h-1zM303 116h1v1h-1zM303 122h1v1h-1zM313 118h1v1h-1zM313 120h1v1h-1zM312 117h1v1h-1zM312 121h1v1h-1zM311 116h1v1h-1zM311 122h1v1h-1zM321 118h1v1h-1zM321 120h1v1h-1zM320 117h1v1h-1zM320 121h1v1h-1zM319 116h1v1h-1zM319 122h1v1h-1zM329 118h1v1h-1zM329 120h1v1h-1zM328 117h1v1h-1zM328 121h1v1h-1zM327 116h1v1h-1zM327 122h1v1h-1zM337 118h1v1h-1zM337 120h1v1h-1zM336 117h1v1h-1zM336 121h1v1h-1zM335 116h1v1h-1zM335 122h1v1h-1zM345 118h1v1h-1zM345 120h1v1h-1zM344 117h1v1h-1zM344 121h1v1h-1zM343 116h1v1h-1zM343 122h1v1h-1zM353 118h1v1h-1zM353 120h1v1h-1zM352 117h1v1h-1zM352 121h1v1h-1zM351 116h1v1h-1zM351 122h1v1h-1zM361 118h1v1h-1zM361 120h1v1h-1zM360 117h1v1h-1zM360 121h1v1h-1zM359 116h1v1h-1zM359 122h1v1h-1zM369 118h1v1h-1zM369 120h1v1h-1zM368 117h1v1h-1zM368 121h1v1h-1zM367 116h1v1h-1zM367 122h1v1h-1zM377 118h1v1h-1zM377 120h1v1h-1zM376 117h1v1h-1zM376 121h1v1h-1zM375 116h1v1h-1zM375 122h1v1h-1zM385 118h1v1h-1zM385 120h1v1h-1zM384 117h1v1h-1zM384 121h1v1h-1zM383 116h1v1h-1zM383 122h1v1h-1zM393 118h1v1h-1zM393 120h1v1h-1zM392 117h1v1h-1zM392 121h1v1h-1zM391 116h1v1h-1zM391 122h1v1h-1zM401 118h1v1h-1zM401 120h1v1h-1zM400 117h1v1h-1zM400 121h1v1h-1zM399 116h1v1h-1zM399 122h1v1h-1zM409 118h1v1h-1zM409 120h1v1h-1zM408 117h1v1h-1zM408 121h1v1h-1zM407 116h1v1h-1zM407 122h1v1h-1zM417 118h1v1h-1zM417 120h1v1h-1zM416 117h1v1h-1zM416 121h1v1h-1zM415 116h1v1h-1zM415 122h1v1h-1zM425 118h1v1h-1zM425 120h1v1h-1zM424 117h1v1h-1zM424 121h1v1h-1zM423 116h1v1h-1zM423 122h1v1h-1zM433 118h1v1h-1zM433 120h1v1h-1zM432 117h1v1h-1zM432 121h1v1h-1zM431 116h1v1h-1zM431 122h1v1h-1zM441 118h1v1h-1zM441 120h1v1h-1zM440 117h1v1h-1zM440 121h1v1h-1zM439 116h1v1h-1zM439 122h1v1h-1zM449 118h1v1h-1zM449 120h1v1h-1zM448 117h1v1h-1zM448 121h1v1h-1zM447 116h1v1h-1zM447 122h1v1h-1zM457 118h1v1h-1zM457 120h1v1h-1zM456 117h1v1h-1zM456 121h1v1h-1zM455 116h1v1h-1zM455 122h1v1h-1zM465 118h1v1h-1zM465 120h1v1h-1zM464 117h1v1h-1zM464 121h1v1h-1zM463 116h1v1h-1zM463 122h1v1h-1zM473 118h1v1h-1zM473 120h1v1h-1zM472 117h1v1h-1zM472 121h1v1h-1zM471 116h1v1h-1zM471 122h1v1h-1zM481 118h1v1h-1zM481 120h1v1h-1zM480 117h1v1h-1zM480 121h1v1h-1zM479 116h1v1h-1zM479 122h1v1h-1zM489 118h1v1h-1zM489 120h1v1h-1zM488 117h1v1h-1zM488 121h1v1h-1zM487 116h1v1h-1zM487 122h1v1h-1zM497 118h1v1h-1zM497 120h1v1h-1zM496 117h1v1h-1zM496 121h1v1h-1zM495 116h1v1h-1zM495 122h1v1h-1zM505 118h1v1h-1zM505 120h1v1h-1zM504 117h1v1h-1zM504 121h1v1h-1zM503 116h1v1h-1zM503 122h1v1h-1zM513 118h1v1h-1zM513 120h1v1h-1zM512 117h1v1h-1zM512 121h1v1h-1zM511 116h1v1h-1zM511 122h1v1h-1zM521 118h1v1h-1zM521 120h1v1h-1zM520 117h1v1h-1zM520 121h1v1h-1zM519 116h1v1h-1zM519 122h1v1h-1zM529 118h1v1h-1zM529 120h1v1h-1zM528 117h1v1h-1zM528 121h1v1h-1zM527 116h1v1h-1zM527 122h1v1h-1zM537 118h1v1h-1zM537 120h1v1h-1zM536 117h1v1h-1zM536 121h1v1h-1zM535 116h1v1h-1zM535 122h1v1h-1zM545 118h1v1h-1zM545 120h1v1h-1zM544 117h1v1h-1zM544 121h1v1h-1zM543 116h1v1h-1zM543 122h1v1h-1zM553 118h1v1h-1zM553 120h1v1h-1zM552 117h1v1h-1zM552 121h1v1h-1zM551 116h1v1h-1zM551 122h1v1h-1zM561 118h1v1h-1zM561 120h1v1h-1zM560 117h1v1h-1zM560 121h1v1h-1zM559 116h1v1h-1zM559 122h1v1h-1zM569 118h1v1h-1zM569 120h1v1h-1zM568 117h1v1h-1zM568 121h1v1h-1zM567 116h1v1h-1zM567 122h1v1h-1zM577 118h1v1h-1zM577 120h1v1h-1zM576 117h1v1h-1zM576 121h1v1h-1zM575 116h1v1h-1zM575 122h1v1h-1zM585 118h1v1h-1zM585 120h1v1h-1zM584 117h1v1h-1zM584 121h1v1h-1zM583 116h1v1h-1zM583 122h1v1h-1zM593 118h1v1h-1zM593 120h1v1h-1zM592 117h1v1h-1zM592 121h1v1h-1zM591 116h1v1h-1zM591 122h1v1h-1zM601 118h1v1h-1zM601 120h1v1h-1zM600 117h1v1h-1zM600 121h1v1h-1zM599 116h1v1h-1zM599 122h1v1h-1zM609 118h1v1h-1zM609 120h1v1h-1zM608 117h1v1h-1zM608 121h1v1h-1zM607 116h1v1h-1zM607 122h1v1h-1zM617 118h1v1h-1zM617 120h1v1h-1zM616 117h1v1h-1zM616 121h1v1h-1zM615 116h1v1h-1zM615 122h1v1h-1zM625 118h1v1h-1zM625 120h1v1h-1zM624 117h1v1h-1zM624 121h1v1h-1zM623 116h1v1h-1zM623 122h1v1h-1zM633 118h1v1h-1zM633 120h1v1h-1zM632 117h1v1h-1zM632 121h1v1h-1zM631 116h1v1h-1zM631 122h1v1h-1zM641 118h1v1h-1zM641 120h1v1h-1zM640 117h1v1h-1zM640 121h1v1h-1zM639 116h1v1h-1zM639 122h1v1h-1zM649 118h1v1h-1zM649 120h1v1h-1zM648 117h1v1h-1zM648 121h1v1h-1zM647 116h1v1h-1zM647 122h1v1h-1zM657 118h1v1h-1zM657 120h1v1h-1zM656 117h1v1h-1zM656 121h1v1h-1zM655 116h1v1h-1zM655 122h1v1h-1zM665 118h1v1h-1zM665 120h1v1h-1zM664 117h1v1h-1zM664 121h1v1h-1zM663 116h1v1h-1zM663 122h1v1h-1zM673 118h1v1h-1zM673 120h1v1h-1zM672 117h1v1h-1zM672 121h1v1h-1zM671 116h1v1h-1zM671 122h1v1h-1zM681 118h1v1h-1zM681 120h1v1h-1zM680 117h1v1h-1zM680 121h1v1h-1zM679 116h1v1h-1zM679 122h1v1h-1zM689 118h1v1h-1zM689 120h1v1h-1zM688 117h1v1h-1zM688 121h1v1h-1zM687 116h1v1h-1zM687 122h1v1h-1zM697 118h1v1h-1zM697 120h1v1h-1zM696 117h1v1h-1zM696 121h1v1h-1zM695 116h1v1h-1zM695 122h1v1h-1zM705 118h1v1h-1zM705 120h1v1h-1zM704 117h1v1h-1zM704 121h1v1h-1zM703 116h1v1h-1zM703 122h1v1h-1zM713 118h1v1h-1zM713 120h1v1h-1zM712 117h1v1h-1zM712 121h1v1h-1zM711 116h1v1h-1zM711 122h1v1h-1zM721 118h1v1h-1zM721 120h1v1h-1zM720 117h1v1h-1zM720 121h1v1h-1zM719 116h1v1h-1zM719 122h1v1h-1zM729 118h1v1h-1zM729 120h1v1h-1zM728 117h1v1h-1zM728 121h1v1h-1zM727 116h1v1h-1zM727 122h1v1h-1zM737 118h1v1h-1zM737 120h1v1h-1zM736 117h1v1h-1zM736 121h1v1h-1zM735 116h1v1h-1zM735 122h1v1h-1zM745 118h1v1h-1zM745 120h1v1h-1zM744 117h1v1h-1zM744 121h1v1h-1zM743 116h1v1h-1zM743 122h1v1h-1zM753 118h1v1h-1zM753 120h1v1h-1zM752 117h1v1h-1zM752 121h1v1h-1zM751 116h1v1h-1zM751 122h1v1h-1zM761 118h1v1h-1zM761 120h1v1h-1zM760 117h1v1h-1zM760 121h1v1h-1zM759 116h1v1h-1zM759 122h1v1h-1zM769 118h1v1h-1zM769 120h1v1h-1zM768 117h1v1h-1zM768 121h1v1h-1zM767 116h1v1h-1zM767 122h1v1h-1zM777 118h1v1h-1zM777 120h1v1h-1zM776 117h1v1h-1zM776 121h1v1h-1zM775 116h1v1h-1zM775 122h1v1h-1zM785 118h1v1h-1zM785 120h1v1h-1zM784 117h1v1h-1zM784 121h1v1h-1zM783 116h1v1h-1zM783 122h1v1h-1zM793 118h1v1h-1zM793 120h1v1h-1zM792 117h1v1h-1zM792 121h1v1h-1zM791 116h1v1h-1zM791 122h1v1h-1zM801 118h1v1h-1zM801 120h1v1h-1zM800 117h1v1h-1zM800 121h1v1h-1zM799 116h1v1h-1zM799 122h1v1h-1zM809 118h1v1h-1zM809 120h1v1h-1zM808 117h1v1h-1zM808 121h1v1h-1zM807 116h1v1h-1zM807 122h1v1h-1zM817 118h1v1h-1zM817 120h1v1h-1zM816 117h1v1h-1zM816 121h1v1h-1zM815 116h1v1h-1zM815 122h1v1h-1zM825 118h1v1h-1zM825 120h1v1h-1zM824 117h1v1h-1zM824 121h1v1h-1zM823 116h1v1h-1zM823 122h1v1h-1zM833 118h1v1h-1zM833 120h1v1h-1zM832 117h1v1h-1zM832 121h1v1h-1zM831 116h1v1h-1zM831 122h1v1h-1zM841 118h1v1h-1zM841 120h1v1h-1zM840 117h1v1h-1zM840 121h1v1h-1zM839 116h1v1h-1zM839 122h1v1h-1zM849 118h1v1h-1zM849 120h1v1h-1zM848 117h1v1h-1zM848 121h1v1h-1zM847 116h1v1h-1zM847 122h1v1h-1zM857 118h1v1h-1zM857 120h1v1h-1zM856 117h1v1h-1zM856 121h1v1h-1zM855 116h1v1h-1zM855 122h1v1h-1zM865 118h1v1h-1zM865 120h1v1h-1zM864 117h1v1h-1zM864 121h1v1h-1zM863 116h1v1h-1zM863 122h1v1h-1zM873 118h1v1h-1zM873 120h1v1h-1zM872 117h1v1h-1zM872 121h1v1h-1zM871 116h1v1h-1zM871 122h1v1h-1zM881 118h1v1h-1zM881 120h1v1h-1zM880 117h1v1h-1zM880 121h1v1h-1zM879 116h1v1h-1zM879 122h1v1h-1zM889 118h1v1h-1zM889 120h1v1h-1zM888 117h1v1h-1zM888 121h1v1h-1zM887 116h1v1h-1zM887 122h1v1h-1zM897 118h1v1h-1zM897 120h1v1h-1zM896 117h1v1h-1zM896 121h1v1h-1zM895 116h1v1h-1zM895 122h1v1h-1zM905 118h1v1h-1zM905 120h1v1h-1zM904 117h1v1h-1zM904 121h1v1h-1zM903 116h1v1h-1zM903 122h1v1h-1zM913 118h1v1h-1zM913 120h1v1h-1zM912 117h1v1h-1zM912 121h1v1h-1zM911 116h1v1h-1zM911 122h1v1h-1zM921 118h1v1h-1zM921 120h1v1h-1zM920 117h1v1h-1zM920 121h1v1h-1zM919 116h1v1h-1zM919 122h1v1h-1zM929 118h1v1h-1zM929 120h1v1h-1zM928 117h1v1h-1zM928 121h1v1h-1zM927 116h1v1h-1zM927 122h1v1h-1zM937 118h1v1h-1zM937 120h1v1h-1zM936 117h1v1h-1zM936 121h1v1h-1zM935 116h1v1h-1zM935 122h1v1h-1zM945 118h1v1h-1zM945 120h1v1h-1zM944 117h1v1h-1zM944 121h1v1h-1zM943 116h1v1h-1zM943 122h1v1h-1z" fill="#0c0c78"/><rect x="157" y="135" width="792" height="1" fill="#0c0c78"/><path d="M161 134h1v1h-1zM161 136h1v1h-1zM160 133h1v1h-1zM160 137h1v1h-1zM159 132h1v1h-1zM159 138h1v1h-1zM169 134h1v1h-1zM169 136h1v1h-1zM168 133h1v1h-1zM168 137h1v1h-1zM167 132h1v1h-1zM167 138h1v1h-1zM177 134h1v1h-1zM177 136h1v1h-1zM176 133h1v1h-1zM176 137h1v1h-1zM175 132h1v1h-1zM175 138h1v1h-1zM185 134h1v1h-1zM185 136h1v1h-1zM184 133h1v1h-1zM184 137h1v1h-1zM183 132h1v1h-1zM183 138h1v1h-1zM193 134h1v1h-1zM193 136h1v1h-1zM192 133h1v1h-1zM192 137h1v1h-1zM191 132h1v1h-1zM191 138h1v1h-1zM201 134h1v1h-1zM201 136h1v1h-1zM200 133h1v1h-1zM200 137h1v1h-1zM199 132h1v1h-1zM199 138h1v1h-1zM209 134h1v1h-1zM209 136h1v1h-1zM208 133h1v1h-1zM208 137h1v1h-1zM207 132h1v1h-1zM207 138h1v1h-1zM217 134h1v1h-1zM217 136h1v1h-1zM216 133h1v1h-1zM216 137h1v1h-1zM215 132h1v1h-1zM215 138h1v1h-1zM225 134h1v1h-1zM225 136h1v1h-1zM224 133h1v1h-1zM224 137h1v1h-1zM223 132h1v1h-1zM223 138h1v1h-1zM233 134h1v1h-1zM233 136h1v1h-1zM232 133h1v1h-1zM232 137h1v1h-1zM231 132h1v1h-1zM231 138h1v1h-1zM241 134h1v1h-1zM241 136h1v1h-1zM240 133h1v1h-1zM240 137h1v1h-1zM239 132h1v1h-1zM239 138h1v1h-1zM249 134h1v1h-1zM249 136h1v1h-1zM248 133h1v1h-1zM248 137h1v1h-1zM247 132h1v1h-1zM247 138h1v1h-1zM257 134h1v1h-1zM257 136h1v1h-1zM256 133h1v1h-1zM256 137h1v1h-1zM255 132h1v1h-1zM255 138h1v1h-1zM265 134h1v1h-1zM265 136h1v1h-1zM264 133h1v1h-1zM264 137h1v1h-1zM263 132h1v1h-1zM263 138h1v1h-1zM273 134h1v1h-1zM273 136h1v1h-1zM272 133h1v1h-1zM272 137h1v1h-1zM271 132h1v1h-1zM271 138h1v1h-1zM281 134h1v1h-1zM281 136h1v1h-1zM280 133h1v1h-1zM280 137h1v1h-1zM279 132h1v1h-1zM279 138h1v1h-1zM289 134h1v1h-1zM289 136h1v1h-1zM288 133h1v1h-1zM288 137h1v1h-1zM287 132h1v1h-1zM287 138h1v1h-1zM297 134h1v1h-1zM297 136h1v1h-1zM296 133h1v1h-1zM296 137h1v1h-1zM295 132h1v1h-1zM295 138h1v1h-1zM305 134h1v1h-1zM305 136h1v1h-1zM304 133h1v1h-1zM304 137h1v1h-1zM303 132h1v1h-1zM303 138h1v1h-1zM313 134h1v1h-1zM313 136h1v1h-1zM312 133h1v1h-1zM312 137h1v1h-1zM311 132h1v1h-1zM311 138h1v1h-1zM321 134h1v1h-1zM321 136h1v1h-1zM320 133h1v1h-1zM320 137h1v1h-1zM319 132h1v1h-1zM319 138h1v1h-1zM329 134h1v1h-1zM329 136h1v1h-1zM328 133h1v1h-1zM328 137h1v1h-1zM327 132h1v1h-1zM327 138h1v1h-1zM337 134h1v1h-1zM337 136h1v1h-1zM336 133h1v1h-1zM336 137h1v1h-1zM335 132h1v1h-1zM335 138h1v1h-1zM345 134h1v1h-1zM345 136h1v1h-1zM344 133h1v1h-1zM344 137h1v1h-1zM343 132h1v1h-1zM343 138h1v1h-1zM353 134h1v1h-1zM353 136h1v1h-1zM352 133h1v1h-1zM352 137h1v1h-1zM351 132h1v1h-1zM351 138h1v1h-1zM361 134h1v1h-1zM361 136h1v1h-1zM360 133h1v1h-1zM360 137h1v1h-1zM359 132h1v1h-1zM359 138h1v1h-1zM369 134h1v1h-1zM369 136h1v1h-1zM368 133h1v1h-1zM368 137h1v1h-1zM367 132h1v1h-1zM367 138h1v1h-1zM377 134h1v1h-1zM377 136h1v1h-1zM376 133h1v1h-1zM376 137h1v1h-1zM375 132h1v1h-1zM375 138h1v1h-1zM385 134h1v1h-1zM385 136h1v1h-1zM384 133h1v1h-1zM384 137h1v1h-1zM383 132h1v1h-1zM383 138h1v1h-1zM393 134h1v1h-1zM393 136h1v1h-1zM392 133h1v1h-1zM392 137h1v1h-1zM391 132h1v1h-1zM391 138h1v1h-1zM401 134h1v1h-1zM401 136h1v1h-1zM400 133h1v1h-1zM400 137h1v1h-1zM399 132h1v1h-1zM399 138h1v1h-1zM409 134h1v1h-1zM409 136h1v1h-1zM408 133h1v1h-1zM408 137h1v1h-1zM407 132h1v1h-1zM407 138h1v1h-1zM417 134h1v1h-1zM417 136h1v1h-1zM416 133h1v1h-1zM416 137h1v1h-1zM415 132h1v1h-1zM415 138h1v1h-1zM425 134h1v1h-1zM425 136h1v1h-1zM424 133h1v1h-1zM424 137h1v1h-1zM423 132h1v1h-1zM423 138h1v1h-1zM433 134h1v1h-1zM433 136h1v1h-1zM432 133h1v1h-1zM432 137h1v1h-1zM431 132h1v1h-1zM431 138h1v1h-1zM441 134h1v1h-1zM441 136h1v1h-1zM440 133h1v1h-1zM440 137h1v1h-1zM439 132h1v1h-1zM439 138h1v1h-1zM449 134h1v1h-1zM449 136h1v1h-1zM448 133h1v1h-1zM448 137h1v1h-1zM447 132h1v1h-1zM447 138h1v1h-1zM457 134h1v1h-1zM457 136h1v1h-1zM456 133h1v1h-1zM456 137h1v1h-1zM455 132h1v1h-1zM455 138h1v1h-1zM465 134h1v1h-1zM465 136h1v1h-1zM464 133h1v1h-1zM464 137h1v1h-1zM463 132h1v1h-1zM463 138h1v1h-1zM473 134h1v1h-1zM473 136h1v1h-1zM472 133h1v1h-1zM472 137h1v1h-1zM471 132h1v1h-1zM471 138h1v1h-1zM481 134h1v1h-1zM481 136h1v1h-1zM480 133h1v1h-1zM480 137h1v1h-1zM479 132h1v1h-1zM479 138h1v1h-1zM489 134h1v1h-1zM489 136h1v1h-1zM488 133h1v1h-1zM488 137h1v1h-1zM487 132h1v1h-1zM487 138h1v1h-1zM497 134h1v1h-1zM497 136h1v1h-1zM496 133h1v1h-1zM496 137h1v1h-1zM495 132h1v1h-1zM495 138h1v1h-1zM505 134h1v1h-1zM505 136h1v1h-1zM504 133h1v1h-1zM504 137h1v1h-1zM503 132h1v1h-1zM503 138h1v1h-1zM513 134h1v1h-1zM513 136h1v1h-1zM512 133h1v1h-1zM512 137h1v1h-1zM511 132h1v1h-1zM511 138h1v1h-1zM521 134h1v1h-1zM521 136h1v1h-1zM520 133h1v1h-1zM520 137h1v1h-1zM519 132h1v1h-1zM519 138h1v1h-1zM529 134h1v1h-1zM529 136h1v1h-1zM528 133h1v1h-1zM528 137h1v1h-1zM527 132h1v1h-1zM527 138h1v1h-1zM537 134h1v1h-1zM537 136h1v1h-1zM536 133h1v1h-1zM536 137h1v1h-1zM535 132h1v1h-1zM535 138h1v1h-1zM545 134h1v1h-1zM545 136h1v1h-1zM544 133h1v1h-1zM544 137h1v1h-1zM543 132h1v1h-1zM543 138h1v1h-1zM553 134h1v1h-1zM553 136h1v1h-1zM552 133h1v1h-1zM552 137h1v1h-1zM551 132h1v1h-1zM551 138h1v1h-1zM561 134h1v1h-1zM561 136h1v1h-1zM560 133h1v1h-1zM560 137h1v1h-1zM559 132h1v1h-1zM559 138h1v1h-1zM569 134h1v1h-1zM569 136h1v1h-1zM568 133h1v1h-1zM568 137h1v1h-1zM567 132h1v1h-1zM567 138h1v1h-1zM577 134h1v1h-1zM577 136h1v1h-1zM576 133h1v1h-1zM576 137h1v1h-1zM575 132h1v1h-1zM575 138h1v1h-1zM585 134h1v1h-1zM585 136h1v1h-1zM584 133h1v1h-1zM584 137h1v1h-1zM583 132h1v1h-1zM583 138h1v1h-1zM593 134h1v1h-1zM593 136h1v1h-1zM592 133h1v1h-1zM592 137h1v1h-1zM591 132h1v1h-1zM591 138h1v1h-1zM601 134h1v1h-1zM601 136h1v1h-1zM600 133h1v1h-1zM600 137h1v1h-1zM599 132h1v1h-1zM599 138h1v1h-1zM609 134h1v1h-1zM609 136h1v1h-1zM608 133h1v1h-1zM608 137h1v1h-1zM607 132h1v1h-1zM607 138h1v1h-1zM617 134h1v1h-1zM617 136h1v1h-1zM616 133h1v1h-1zM616 137h1v1h-1zM615 132h1v1h-1zM615 138h1v1h-1zM625 134h1v1h-1zM625 136h1v1h-1zM624 133h1v1h-1zM624 137h1v1h-1zM623 132h1v1h-1zM623 138h1v1h-1zM633 134h1v1h-1zM633 136h1v1h-1zM632 133h1v1h-1zM632 137h1v1h-1zM631 132h1v1h-1zM631 138h1v1h-1zM641 134h1v1h-1zM641 136h1v1h-1zM640 133h1v1h-1zM640 137h1v1h-1zM639 132h1v1h-1zM639 138h1v1h-1zM649 134h1v1h-1zM649 136h1v1h-1zM648 133h1v1h-1zM648 137h1v1h-1zM647 132h1v1h-1zM647 138h1v1h-1zM657 134h1v1h-1zM657 136h1v1h-1zM656 133h1v1h-1zM656 137h1v1h-1zM655 132h1v1h-1zM655 138h1v1h-1zM665 134h1v1h-1zM665 136h1v1h-1zM664 133h1v1h-1zM664 137h1v1h-1zM663 132h1v1h-1zM663 138h1v1h-1zM673 134h1v1h-1zM673 136h1v1h-1zM672 133h1v1h-1zM672 137h1v1h-1zM671 132h1v1h-1zM671 138h1v1h-1zM681 134h1v1h-1zM681 136h1v1h-1zM680 133h1v1h-1zM680 137h1v1h-1zM679 132h1v1h-1zM679 138h1v1h-1zM689 134h1v1h-1zM689 136h1v1h-1zM688 133h1v1h-1zM688 137h1v1h-1zM687 132h1v1h-1zM687 138h1v1h-1zM697 134h1v1h-1zM697 136h1v1h-1zM696 133h1v1h-1zM696 137h1v1h-1zM695 132h1v1h-1zM695 138h1v1h-1zM705 134h1v1h-1zM705 136h1v1h-1zM704 133h1v1h-1zM704 137h1v1h-1zM703 132h1v1h-1zM703 138h1v1h-1zM713 134h1v1h-1zM713 136h1v1h-1zM712 133h1v1h-1zM712 137h1v1h-1zM711 132h1v1h-1zM711 138h1v1h-1zM721 134h1v1h-1zM721 136h1v1h-1zM720 133h1v1h-1zM720 137h1v1h-1zM719 132h1v1h-1zM719 138h1v1h-1zM729 134h1v1h-1zM729 136h1v1h-1zM728 133h1v1h-1zM728 137h1v1h-1zM727 132h1v1h-1zM727 138h1v1h-1zM737 134h1v1h-1zM737 136h1v1h-1zM736 133h1v1h-1zM736 137h1v1h-1zM735 132h1v1h-1zM735 138h1v1h-1zM745 134h1v1h-1zM745 136h1v1h-1zM744 133h1v1h-1zM744 137h1v1h-1zM743 132h1v1h-1zM743 138h1v1h-1zM753 134h1v1h-1zM753 136h1v1h-1zM752 133h1v1h-1zM752 137h1v1h-1zM751 132h1v1h-1zM751 138h1v1h-1zM761 134h1v1h-1zM761 136h1v1h-1zM760 133h1v1h-1zM760 137h1v1h-1zM759 132h1v1h-1zM759 138h1v1h-1zM769 134h1v1h-1zM769 136h1v1h-1zM768 133h1v1h-1zM768 137h1v1h-1zM767 132h1v1h-1zM767 138h1v1h-1zM777 134h1v1h-1zM777 136h1v1h-1zM776 133h1v1h-1zM776 137h1v1h-1zM775 132h1v1h-1zM775 138h1v1h-1zM785 134h1v1h-1zM785 136h1v1h-1zM784 133h1v1h-1zM784 137h1v1h-1zM783 132h1v1h-1zM783 138h1v1h-1zM793 134h1v1h-1zM793 136h1v1h-1zM792 133h1v1h-1zM792 137h1v1h-1zM791 132h1v1h-1zM791 138h1v1h-1zM801 134h1v1h-1zM801 136h1v1h-1zM800 133h1v1h-1zM800 137h1v1h-1zM799 132h1v1h-1zM799 138h1v1h-1zM809 134h1v1h-1zM809 136h1v1h-1zM808 133h1v1h-1zM808 137h1v1h-1zM807 132h1v1h-1zM807 138h1v1h-1zM817 134h1v1h-1zM817 136h1v1h-1zM816 133h1v1h-1zM816 137h1v1h-1zM815 132h1v1h-1zM815 138h1v1h-1zM825 134h1v1h-1zM825 136h1v1h-1zM824 133h1v1h-1zM824 137h1v1h-1zM823 132h1v1h-1zM823 138h1v1h-1zM833 134h1v1h-1zM833 136h1v1h-1zM832 133h1v1h-1zM832 137h1v1h-1zM831 132h1v1h-1zM831 138h1v1h-1zM841 134h1v1h-1zM841 136h1v1h-1zM840 133h1v1h-1zM840 137h1v1h-1zM839 132h1v1h-1zM839 138h1v1h-1zM849 134h1v1h-1zM849 136h1v1h-1zM848 133h1v1h-1zM848 137h1v1h-1zM847 132h1v1h-1zM847 138h1v1h-1zM857 134h1v1h-1zM857 136h1v1h-1zM856 133h1v1h-1zM856 137h1v1h-1zM855 132h1v1h-1zM855 138h1v1h-1zM865 134h1v1h-1zM865 136h1v1h-1zM864 133h1v1h-1zM864 137h1v1h-1zM863 132h1v1h-1zM863 138h1v1h-1zM873 134h1v1h-1zM873 136h1v1h-1zM872 133h1v1h-1zM872 137h1v1h-1zM871 132h1v1h-1zM871 138h1v1h-1zM881 134h1v1h-1zM881 136h1v1h-1zM880 133h1v1h-1zM880 137h1v1h-1zM879 132h1v1h-1zM879 138h1v1h-1zM889 134h1v1h-1zM889 136h1v1h-1zM888 133h1v1h-1zM888 137h1v1h-1zM887 132h1v1h-1zM887 138h1v1h-1zM897 134h1v1h-1zM897 136h1v1h-1zM896 133h1v1h-1zM896 137h1v1h-1zM895 132h1v1h-1zM895 138h1v1h-1zM905 134h1v1h-1zM905 136h1v1h-1zM904 133h1v1h-1zM904 137h1v1h-1zM903 132h1v1h-1zM903 138h1v1h-1zM913 134h1v1h-1zM913 136h1v1h-1zM912 133h1v1h-1zM912 137h1v1h-1zM911 132h1v1h-1zM911 138h1v1h-1zM921 134h1v1h-1zM921 136h1v1h-1zM920 133h1v1h-1zM920 137h1v1h-1zM919 132h1v1h-1zM919 138h1v1h-1zM929 134h1v1h-1zM929 136h1v1h-1zM928 133h1v1h-1zM928 137h1v1h-1zM927 132h1v1h-1zM927 138h1v1h-1zM937 134h1v1h-1zM937 136h1v1h-1zM936 133h1v1h-1zM936 137h1v1h-1zM935 132h1v1h-1zM935 138h1v1h-1zM945 134h1v1h-1zM945 136h1v1h-1zM944 133h1v1h-1zM944 137h1v1h-1zM943 132h1v1h-1zM943 138h1v1h-1z" fill="#0c0c78"/><rect x="157" y="151" width="792" height="1" fill="#0c0c78"/><path d="M161 150h1v1h-1zM161 152h1v1h-1zM160 149h1v1h-1zM160 153h1v1h-1zM159 148h1v1h-1zM159 154h1v1h-1zM169 150h1v1h-1zM169 152h1v1h-1zM168 149h1v1h-1zM168 153h1v1h-1zM167 148h1v1h-1zM167 154h1v1h-1zM177 150h1v1h-1zM177 152h1v1h-1zM176 149h1v1h-1zM176 153h1v1h-1zM175 148h1v1h-1zM175 154h1v1h-1zM185 150h1v1h-1zM185 152h1v1h-1zM184 149h1v1h-1zM184 153h1v1h-1zM183 148h1v1h-1zM183 154h1v1h-1zM193 150h1v1h-1zM193 152h1v1h-1zM192 149h1v1h-1zM192 153h1v1h-1zM191 148h1v1h-1zM191 154h1v1h-1zM201 150h1v1h-1zM201 152h1v1h-1zM200 149h1v1h-1zM200 153h1v1h-1zM199 148h1v1h-1zM199 154h1v1h-1zM209 150h1v1h-1zM209 152h1v1h-1zM208 149h1v1h-1zM208 153h1v1h-1zM207 148h1v1h-1zM207 154h1v1h-1zM217 150h1v1h-1zM217 152h1v1h-1zM216 149h1v1h-1zM216 153h1v1h-1zM215 148h1v1h-1zM215 154h1v1h-1zM225 150h1v1h-1zM225 152h1v1h-1zM224 149h1v1h-1zM224 153h1v1h-1zM223 148h1v1h-1zM223 154h1v1h-1zM233 150h1v1h-1zM233 152h1v1h-1zM232 149h1v1h-1zM232 153h1v1h-1zM231 148h1v1h-1zM231 154h1v1h-1zM241 150h1v1h-1zM241 152h1v1h-1zM240 149h1v1h-1zM240 153h1v1h-1zM239 148h1v1h-1zM239 154h1v1h-1zM249 150h1v1h-1zM249 152h1v1h-1zM248 149h1v1h-1zM248 153h1v1h-1zM247 148h1v1h-1zM247 154h1v1h-1zM257 150h1v1h-1zM257 152h1v1h-1zM256 149h1v1h-1zM256 153h1v1h-1zM255 148h1v1h-1zM255 154h1v1h-1zM265 150h1v1h-1zM265 152h1v1h-1zM264 149h1v1h-1zM264 153h1v1h-1zM263 148h1v1h-1zM263 154h1v1h-1zM273 150h1v1h-1zM273 152h1v1h-1zM272 149h1v1h-1zM272 153h1v1h-1zM271 148h1v1h-1zM271 154h1v1h-1zM281 150h1v1h-1zM281 152h1v1h-1zM280 149h1v1h-1zM280 153h1v1h-1zM279 148h1v1h-1zM279 154h1v1h-1zM289 150h1v1h-1zM289 152h1v1h-1zM288 149h1v1h-1zM288 153h1v1h-1zM287 148h1v1h-1zM287 154h1v1h-1zM297 150h1v1h-1zM297 152h1v1h-1zM296 149h1v1h-1zM296 153h1v1h-1zM295 148h1v1h-1zM295 154h1v1h-1zM305 150h1v1h-1zM305 152h1v1h-1zM304 149h1v1h-1zM304 153h1v1h-1zM303 148h1v1h-1zM303 154h1v1h-1zM313 150h1v1h-1zM313 152h1v1h-1zM312 149h1v1h-1zM312 153h1v1h-1zM311 148h1v1h-1zM311 154h1v1h-1zM321 150h1v1h-1zM321 152h1v1h-1zM320 149h1v1h-1zM320 153h1v1h-1zM319 148h1v1h-1zM319 154h1v1h-1zM329 150h1v1h-1zM329 152h1v1h-1zM328 149h1v1h-1zM328 153h1v1h-1zM327 148h1v1h-1zM327 154h1v1h-1zM337 150h1v1h-1zM337 152h1v1h-1zM336 149h1v1h-1zM336 153h1v1h-1zM335 148h1v1h-1zM335 154h1v1h-1zM345 150h1v1h-1zM345 152h1v1h-1zM344 149h1v1h-1zM344 153h1v1h-1zM343 148h1v1h-1zM343 154h1v1h-1zM353 150h1v1h-1zM353 152h1v1h-1zM352 149h1v1h-1zM352 153h1v1h-1zM351 148h1v1h-1zM351 154h1v1h-1zM361 150h1v1h-1zM361 152h1v1h-1zM360 149h1v1h-1zM360 153h1v1h-1zM359 148h1v1h-1zM359 154h1v1h-1zM369 150h1v1h-1zM369 152h1v1h-1zM368 149h1v1h-1zM368 153h1v1h-1zM367 148h1v1h-1zM367 154h1v1h-1zM377 150h1v1h-1zM377 152h1v1h-1zM376 149h1v1h-1zM376 153h1v1h-1zM375 148h1v1h-1zM375 154h1v1h-1zM385 150h1v1h-1zM385 152h1v1h-1zM384 149h1v1h-1zM384 153h1v1h-1zM383 148h1v1h-1zM383 154h1v1h-1zM393 150h1v1h-1zM393 152h1v1h-1zM392 149h1v1h-1zM392 153h1v1h-1zM391 148h1v1h-1zM391 154h1v1h-1zM401 150h1v1h-1zM401 152h1v1h-1zM400 149h1v1h-1zM400 153h1v1h-1zM399 148h1v1h-1zM399 154h1v1h-1zM409 150h1v1h-1zM409 152h1v1h-1zM408 149h1v1h-1zM408 153h1v1h-1zM407 148h1v1h-1zM407 154h1v1h-1zM417 150h1v1h-1zM417 152h1v1h-1zM416 149h1v1h-1zM416 153h1v1h-1zM415 148h1v1h-1zM415 154h1v1h-1zM425 150h1v1h-1zM425 152h1v1h-1zM424 149h1v1h-1zM424 153h1v1h-1zM423 148h1v1h-1zM423 154h1v1h-1zM433 150h1v1h-1zM433 152h1v1h-1zM432 149h1v1h-1zM432 153h1v1h-1zM431 148h1v1h-1zM431 154h1v1h-1zM441 150h1v1h-1zM441 152h1v1h-1zM440 149h1v1h-1zM440 153h1v1h-1zM439 148h1v1h-1zM439 154h1v1h-1zM449 150h1v1h-1zM449 152h1v1h-1zM448 149h1v1h-1zM448 153h1v1h-1zM447 148h1v1h-1zM447 154h1v1h-1zM457 150h1v1h-1zM457 152h1v1h-1zM456 149h1v1h-1zM456 153h1v1h-1zM455 148h1v1h-1zM455 154h1v1h-1zM465 150h1v1h-1zM465 152h1v1h-1zM464 149h1v1h-1zM464 153h1v1h-1zM463 148h1v1h-1zM463 154h1v1h-1zM473 150h1v1h-1zM473 152h1v1h-1zM472 149h1v1h-1zM472 153h1v1h-1zM471 148h1v1h-1zM471 154h1v1h-1zM481 150h1v1h-1zM481 152h1v1h-1zM480 149h1v1h-1zM480 153h1v1h-1zM479 148h1v1h-1zM479 154h1v1h-1zM489 150h1v1h-1zM489 152h1v1h-1zM488 149h1v1h-1zM488 153h1v1h-1zM487 148h1v1h-1zM487 154h1v1h-1zM497 150h1v1h-1zM497 152h1v1h-1zM496 149h1v1h-1zM496 153h1v1h-1zM495 148h1v1h-1zM495 154h1v1h-1zM505 150h1v1h-1zM505 152h1v1h-1zM504 149h1v1h-1zM504 153h1v1h-1zM503 148h1v1h-1zM503 154h1v1h-1zM513 150h1v1h-1zM513 152h1v1h-1zM512 149h1v1h-1zM512 153h1v1h-1zM511 148h1v1h-1zM511 154h1v1h-1zM521 150h1v1h-1zM521 152h1v1h-1zM520 149h1v1h-1zM520 153h1v1h-1zM519 148h1v1h-1zM519 154h1v1h-1zM529 150h1v1h-1zM529 152h1v1h-1zM528 149h1v1h-1zM528 153h1v1h-1zM527 148h1v1h-1zM527 154h1v1h-1zM537 150h1v1h-1zM537 152h1v1h-1zM536 149h1v1h-1zM536 153h1v1h-1zM535 148h1v1h-1zM535 154h1v1h-1zM545 150h1v1h-1zM545 152h1v1h-1zM544 149h1v1h-1zM544 153h1v1h-1zM543 148h1v1h-1zM543 154h1v1h-1zM553 150h1v1h-1zM553 152h1v1h-1zM552 149h1v1h-1zM552 153h1v1h-1zM551 148h1v1h-1zM551 154h1v1h-1zM561 150h1v1h-1zM561 152h1v1h-1zM560 149h1v1h-1zM560 153h1v1h-1zM559 148h1v1h-1zM559 154h1v1h-1zM569 150h1v1h-1zM569 152h1v1h-1zM568 149h1v1h-1zM568 153h1v1h-1zM567 148h1v1h-1zM567 154h1v1h-1zM577 150h1v1h-1zM577 152h1v1h-1zM576 149h1v1h-1zM576 153h1v1h-1zM575 148h1v1h-1zM575 154h1v1h-1zM585 150h1v1h-1zM585 152h1v1h-1zM584 149h1v1h-1zM584 153h1v1h-1zM583 148h1v1h-1zM583 154h1v1h-1zM593 150h1v1h-1zM593 152h1v1h-1zM592 149h1v1h-1zM592 153h1v1h-1zM591 148h1v1h-1zM591 154h1v1h-1zM601 150h1v1h-1zM601 152h1v1h-1zM600 149h1v1h-1zM600 153h1v1h-1zM599 148h1v1h-1zM599 154h1v1h-1zM609 150h1v1h-1zM609 152h1v1h-1zM608 149h1v1h-1zM608 153h1v1h-1zM607 148h1v1h-1zM607 154h1v1h-1zM617 150h1v1h-1zM617 152h1v1h-1zM616 149h1v1h-1zM616 153h1v1h-1zM615 148h1v1h-1zM615 154h1v1h-1zM625 150h1v1h-1zM625 152h1v1h-1zM624 149h1v1h-1zM624 153h1v1h-1zM623 148h1v1h-1zM623 154h1v1h-1zM633 150h1v1h-1zM633 152h1v1h-1zM632 149h1v1h-1zM632 153h1v1h-1zM631 148h1v1h-1zM631 154h1v1h-1zM641 150h1v1h-1zM641 152h1v1h-1zM640 149h1v1h-1zM640 153h1v1h-1zM639 148h1v1h-1zM639 154h1v1h-1zM649 150h1v1h-1zM649 152h1v1h-1zM648 149h1v1h-1zM648 153h1v1h-1zM647 148h1v1h-1zM647 154h1v1h-1zM657 150h1v1h-1zM657 152h1v1h-1zM656 149h1v1h-1zM656 153h1v1h-1zM655 148h1v1h-1zM655 154h1v1h-1zM665 150h1v1h-1zM665 152h1v1h-1zM664 149h1v1h-1zM664 153h1v1h-1zM663 148h1v1h-1zM663 154h1v1h-1zM673 150h1v1h-1zM673 152h1v1h-1zM672 149h1v1h-1zM672 153h1v1h-1zM671 148h1v1h-1zM671 154h1v1h-1zM681 150h1v1h-1zM681 152h1v1h-1zM680 149h1v1h-1zM680 153h1v1h-1zM679 148h1v1h-1zM679 154h1v1h-1zM689 150h1v1h-1zM689 152h1v1h-1zM688 149h1v1h-1zM688 153h1v1h-1zM687 148h1v1h-1zM687 154h1v1h-1zM697 150h1v1h-1zM697 152h1v1h-1zM696 149h1v1h-1zM696 153h1v1h-1zM695 148h1v1h-1zM695 154h1v1h-1zM705 150h1v1h-1zM705 152h1v1h-1zM704 149h1v1h-1zM704 153h1v1h-1zM703 148h1v1h-1zM703 154h1v1h-1zM713 150h1v1h-1zM713 152h1v1h-1zM712 149h1v1h-1zM712 153h1v1h-1zM711 148h1v1h-1zM711 154h1v1h-1zM721 150h1v1h-1zM721 152h1v1h-1zM720 149h1v1h-1zM720 153h1v1h-1zM719 148h1v1h-1zM719 154h1v1h-1zM729 150h1v1h-1zM729 152h1v1h-1zM728 149h1v1h-1zM728 153h1v1h-1zM727 148h1v1h-1zM727 154h1v1h-1zM737 150h1v1h-1zM737 152h1v1h-1zM736 149h1v1h-1zM736 153h1v1h-1zM735 148h1v1h-1zM735 154h1v1h-1zM745 150h1v1h-1zM745 152h1v1h-1zM744 149h1v1h-1zM744 153h1v1h-1zM743 148h1v1h-1zM743 154h1v1h-1zM753 150h1v1h-1zM753 152h1v1h-1zM752 149h1v1h-1zM752 153h1v1h-1zM751 148h1v1h-1zM751 154h1v1h-1zM761 150h1v1h-1zM761 152h1v1h-1zM760 149h1v1h-1zM760 153h1v1h-1zM759 148h1v1h-1zM759 154h1v1h-1zM769 150h1v1h-1zM769 152h1v1h-1zM768 149h1v1h-1zM768 153h1v1h-1zM767 148h1v1h-1zM767 154h1v1h-1zM777 150h1v1h-1zM777 152h1v1h-1zM776 149h1v1h-1zM776 153h1v1h-1zM775 148h1v1h-1zM775 154h1v1h-1zM785 150h1v1h-1zM785 152h1v1h-1zM784 149h1v1h-1zM784 153h1v1h-1zM783 148h1v1h-1zM783 154h1v1h-1zM793 150h1v1h-1zM793 152h1v1h-1zM792 149h1v1h-1zM792 153h1v1h-1zM791 148h1v1h-1zM791 154h1v1h-1zM801 150h1v1h-1zM801 152h1v1h-1zM800 149h1v1h-1zM800 153h1v1h-1zM799 148h1v1h-1zM799 154h1v1h-1zM809 150h1v1h-1zM809 152h1v1h-1zM808 149h1v1h-1zM808 153h1v1h-1zM807 148h1v1h-1zM807 154h1v1h-1zM817 150h1v1h-1zM817 152h1v1h-1zM816 149h1v1h-1zM816 153h1v1h-1zM815 148h1v1h-1zM815 154h1v1h-1zM825 150h1v1h-1zM825 152h1v1h-1zM824 149h1v1h-1zM824 153h1v1h-1zM823 148h1v1h-1zM823 154h1v1h-1zM833 150h1v1h-1zM833 152h1v1h-1zM832 149h1v1h-1zM832 153h1v1h-1zM831 148h1v1h-1zM831 154h1v1h-1zM841 150h1v1h-1zM841 152h1v1h-1zM840 149h1v1h-1zM840 153h1v1h-1zM839 148h1v1h-1zM839 154h1v1h-1zM849 150h1v1h-1zM849 152h1v1h-1zM848 149h1v1h-1zM848 153h1v1h-1zM847 148h1v1h-1zM847 154h1v1h-1zM857 150h1v1h-1zM857 152h1v1h-1zM856 149h1v1h-1zM856 153h1v1h-1zM855 148h1v1h-1zM855 154h1v1h-1zM865 150h1v1h-1zM865 152h1v1h-1zM864 149h1v1h-1zM864 153h1v1h-1zM863 148h1v1h-1zM863 154h1v1h-1zM873 150h1v1h-1zM873 152h1v1h-1zM872 149h1v1h-1zM872 153h1v1h-1zM871 148h1v1h-1zM871 154h1v1h-1zM881 150h1v1h-1zM881 152h1v1h-1zM880 149h1v1h-1zM880 153h1v1h-1zM879 148h1v1h-1zM879 154h1v1h-1zM889 150h1v1h-1zM889 152h1v1h-1zM888 149h1v1h-1zM888 153h1v1h-1zM887 148h1v1h-1zM887 154h1v1h-1zM897 150h1v1h-1zM897 152h1v1h-1zM896 149h1v1h-1zM896 153h1v1h-1zM895 148h1v1h-1zM895 154h1v1h-1zM905 150h1v1h-1zM905 152h1v1h-1zM904 149h1v1h-1zM904 153h1v1h-1zM903 148h1v1h-1zM903 154h1v1h-1zM913 150h1v1h-1zM913 152h1v1h-1zM912 149h1v1h-1zM912 153h1v1h-1zM911 148h1v1h-1zM911 154h1v1h-1zM921 150h1v1h-1zM921 152h1v1h-1zM920 149h1v1h-1zM920 153h1v1h-1zM919 148h1v1h-1zM919 154h1v1h-1zM929 150h1v1h-1zM929 152h1v1h-1zM928 149h1v1h-1zM928 153h1v1h-1zM927 148h1v1h-1zM927 154h1v1h-1zM937 150h1v1h-1zM937 152h1v1h-1zM936 149h1v1h-1zM936 153h1v1h-1zM935 148h1v1h-1zM935 154h1v1h-1zM945 150h1v1h-1zM945 152h1v1h-1zM944 149h1v1h-1zM944 153h1v1h-1zM943 148h1v1h-1zM943 154h1v1h-1z" fill="#0c0c78"/><rect x="157" y="167" width="792" height="1" fill="#1e78b4"/><path d="M161 166h1v1h-1zM161 168h1v1h-1zM160 165h1v1h-1zM160 169h1v1h-1zM159 164h1v1h-1zM159 170h1v1h-1zM169 166h1v1h-1zM169 168h1v1h-1zM168 165h1v1h-1zM168 169h1v1h-1zM167 164h1v1h-1zM167 170h1v1h-1zM177 166h1v1h-1zM177 168h1v1h-1zM176 165h1v1h-1zM176 169h1v1h-1zM175 164h1v1h-1zM175 170h1v1h-1zM185 166h1v1h-1zM185 168h1v1h-1zM184 165h1v1h-1zM184 169h1v1h-1zM183 164h1v1h-1zM183 170h1v1h-1zM193 166h1v1h-1zM193 168h1v1h-1zM192 165h1v1h-1zM192 169h1v1h-1zM191 164h1v1h-1zM191 170h1v1h-1zM201 166h1v1h-1zM201 168h1v1h-1zM200 165h1v1h-1zM200 169h1v1h-1zM199 164h1v1h-1zM199 170h1v1h-1zM209 166h1v1h-1zM209 168h1v1h-1zM208 165h1v1h-1zM208 169h1v1h-1zM207 164h1v1h-1zM207 170h1v1h-1zM217 166h1v1h-1zM217 168h1v1h-1zM216 165h1v1h-1zM216 169h1v1h-1zM215 164h1v1h-1zM215 170h1v1h-1zM225 166h1v1h-1zM225 168h1v1h-1zM224 165h1v1h-1zM224 169h1v1h-1zM223 164h1v1h-1zM223 170h1v1h-1zM233 166h1v1h-1zM233 168h1v1h-1zM232 165h1v1h-1zM232 169h1v1h-1zM231 164h1v1h-1zM231 170h1v1h-1zM241 166h1v1h-1zM241 168h1v1h-1zM240 165h1v1h-1zM240 169h1v1h-1zM239 164h1v1h-1zM239 170h1v1h-1zM249 166h1v1h-1zM249 168h1v1h-1zM248 165h1v1h-1zM248 169h1v1h-1zM247 164h1v1h-1zM247 170h1v1h-1zM257 166h1v1h-1zM257 168h1v1h-1zM256 165h1v1h-1zM256 169h1v1h-1zM255 164h1v1h-1zM255 170h1v1h-1zM265 166h1v1h-1zM265 168h1v1h-1zM264 165h1v1h-1zM264 169h1v1h-1zM263 164h1v1h-1zM263 170h1v1h-1zM273 166h1v1h-1zM273 168h1v1h-1zM272 165h1v1h-1zM272 169h1v1h-1zM271 164h1v1h-1zM271 170h1v1h-1zM281 166h1v1h-1zM281 168h1v1h-1zM280 165h1v1h-1zM280 169h1v1h-1zM279 164h1v1h-1zM279 170h1v1h-1zM289 166h1v1h-1zM289 168h1v1h-1zM288 165h1v1h-1zM288 169h1v1h-1zM287 164h1v1h-1zM287 170h1v1h-1zM297 166h1v1h-1zM297 168h1v1h-1zM296 165h1v1h-1zM296 169h1v1h-1zM295 164h1v1h-1zM295 170h1v1h-1zM305 166h1v1h-1zM305 168h1v1h-1zM304 165h1v1h-1zM304 169h1v1h-1zM303 164h1v1h-1zM303 170h1v1h-1zM313 166h1v1h-1zM313 168h1v1h-1zM312 165h1v1h-1zM312 169h1v1h-1zM311 164h1v1h-1zM311 170h1v1h-1zM321 166h1v1h-1zM321 168h1v1h-1zM320 165h1v1h-1zM320 169h1v1h-1zM319 164h1v1h-1zM319 170h1v1h-1zM329 166h1v1h-1zM329 168h1v1h-1zM328 165h1v1h-1zM328 169h1v1h-1zM327 164h1v1h-1zM327 170h1v1h-1zM337 166h1v1h-1zM337 168h1v1h-1zM336 165h1v1h-1zM336 169h1v1h-1zM335 164h1v1h-1zM335 170h1v1h-1zM345 166h1v1h-1zM345 168h1v1h-1zM344 165h1v1h-1zM344 169h1v1h-1zM343 164h1v1h-1zM343 170h1v1h-1zM353 166h1v1h-1zM353 168h1v1h-1zM352 165h1v1h-1zM352 169h1v1h-1zM351 164h1v1h-1zM351 170h1v1h-1zM361 166h1v1h-1zM361 168h1v1h-1zM360 165h1v1h-1zM360 169h1v1h-1zM359 164h1v1h-1zM359 170h1v1h-1zM369 166h1v1h-1zM369 168h1v1h-1zM368 165h1v1h-1zM368 169h1v1h-1zM367 164h1v1h-1zM367 170h1v1h-1zM377 166h1v1h-1zM377 168h1v1h-1zM376 165h1v1h-1zM376 169h1v1h-1zM375 164h1v1h-1zM375 170h1v1h-1zM385 166h1v1h-1zM385 168h1v1h-1zM384 165h1v1h-1zM384 169h1v1h-1zM383 164h1v1h-1zM383 170h1v1h-1zM393 166h1v1h-1zM393 168h1v1h-1zM392 165h1v1h-1zM392 169h1v1h-1zM391 164h1v1h-1zM391 170h1v1h-1zM401 166h1v1h-1zM401 168h1v1h-1zM400 165h1v1h-1zM400 169h1v1h-1zM399 164h1v1h-1zM399 170h1v1h-1zM409 166h1v1h-1zM409 168h1v1h-1zM408 165h1v1h-1zM408 169h1v1h-1zM407 164h1v1h-1zM407 170h1v1h-1zM417 166h1v1h-1zM417 168h1v1h-1zM416 165h1v1h-1zM416 169h1v1h-1zM415 164h1v1h-1zM415 170h1v1h-1zM425 166h1v1h-1zM425 168h1v1h-1zM424 165h1v1h-1zM424 169h1v1h-1zM423 164h1v1h-1zM423 170h1v1h-1zM433 166h1v1h-1zM433 168h1v1h-1zM432 165h1v1h-1zM432 169h1v1h-1zM431 164h1v1h-1zM431 170h1v1h-1zM441 166h1v1h-1zM441 168h1v1h-1zM440 165h1v1h-1zM440 169h1v1h-1zM439 164h1v1h-1zM439 170h1v1h-1zM449 166h1v1h-1zM449 168h1v1h-1zM448 165h1v1h-1zM448 169h1v1h-1zM447 164h1v1h-1zM447 170h1v1h-1zM457 166h1v1h-1zM457 168h1v1h-1zM456 165h1v1h-1zM456 169h1v1h-1zM455 164h1v1h-1zM455 170h1v1h-1zM465 166h1v1h-1zM465 168h1v1h-1zM464 165h1v1h-1zM464 169h1v1h-1zM463 164h1v1h-1zM463 170h1v1h-1zM473 166h1v1h-1zM473 168h1v1h-1zM472 165h1v1h-1zM472 169h1v1h-1zM471 164h1v1h-1zM471 170h1v1h-1zM481 166h1v1h-1zM481 168h1v1h-1zM480 165h1v1h-1zM480 169h1v1h-1zM479 164h1v1h-1zM479 170h1v1h-1zM489 166h1v1h-1zM489 168h1v1h-1zM488 165h1v1h-1zM488 169h1v1h-1zM487 164h1v1h-1zM487 170h1v1h-1zM497 166h1v1h-1zM497 168h1v1h-1zM496 165h1v1h-1zM496 169h1v1h-1zM495 164h1v1h-1zM495 170h1v1h-1zM505 166h1v1h-1zM505 168h1v1h-1zM504 165h1v1h-1zM504 169h1v1h-1zM503 164h1v1h-1zM503 170h1v1h-1zM513 166h1v1h-1zM513 168h1v1h-1zM512 165h1v1h-1zM512 169h1v1h-1zM511 164h1v1h-1zM511 170h1v1h-1zM521 166h1v1h-1zM521 168h1v1h-1zM520 165h1v1h-1zM520 169h1v1h-1zM519 164h1v1h-1zM519 170h1v1h-1zM529 166h1v1h-1zM529 168h1v1h-1zM528 165h1v1h-1zM528 169h1v1h-1zM527 164h1v1h-1zM527 170h1v1h-1zM537 166h1v1h-1zM537 168h1v1h-1zM536 165h1v1h-1zM536 169h1v1h-1zM535 164h1v1h-1zM535 170h1v1h-1zM545 166h1v1h-1zM545 168h1v1h-1zM544 165h1v1h-1zM544 169h1v1h-1zM543 164h1v1h-1zM543 170h1v1h-1zM553 166h1v1h-1zM553 168h1v1h-1zM552 165h1v1h-1zM552 169h1v1h-1zM551 164h1v1h-1zM551 170h1v1h-1zM561 166h1v1h-1zM561 168h1v1h-1zM560 165h1v1h-1zM560 169h1v1h-1zM559 164h1v1h-1zM559 170h1v1h-1zM569 166h1v1h-1zM569 168h1v1h-1zM568 165h1v1h-1zM568 169h1v1h-1zM567 164h1v1h-1zM567 170h1v1h-1zM577 166h1v1h-1zM577 168h1v1h-1zM576 165h1v1h-1zM576 169h1v1h-1zM575 164h1v1h-1zM575 170h1v1h-1zM585 166h1v1h-1zM585 168h1v1h-1zM584 165h1v1h-1zM584 169h1v1h-1zM583 164h1v1h-1zM583 170h1v1h-1zM593 166h1v1h-1zM593 168h1v1h-1zM592 165h1v1h-1zM592 169h1v1h-1zM591 164h1v1h-1zM591 170h1v1h-1zM601 166h1v1h-1zM601 168h1v1h-1zM600 165h1v1h-1zM600 169h1v1h-1zM599 164h1v1h-1zM599 170h1v1h-1zM609 166h1v1h-1zM609 168h1v1h-1zM608 165h1v1h-1zM608 169h1v1h-1zM607 164h1v1h-1zM607 170h1v1h-1zM617 166h1v1h-1zM617 168h1v1h-1zM616 165h1v1h-1zM616 169h1v1h-1zM615 164h1v1h-1zM615 170h1v1h-1zM625 166h1v1h-1zM625 168h1v1h-1zM624 165h1v1h-1zM624 169h1v1h-1zM623 164h1v1h-1zM623 170h1v1h-1zM633 166h1v1h-1zM633 168h1v1h-1zM632 165h1v1h-1zM632 169h1v1h-1zM631 164h1v1h-1zM631 170h1v1h-1zM641 166h1v1h-1zM641 168h1v1h-1zM640 165h1v1h-1zM640 169h1v1h-1zM639 164h1v1h-1zM639 170h1v1h-1zM649 166h1v1h-1zM649 168h1v1h-1zM648 165h1v1h-1zM648 169h1v1h-1zM647 164h1v1h-1zM647 170h1v1h-1zM657 166h1v1h-1zM657 168h1v1h-1zM656 165h1v1h-1zM656 169h1v1h-1zM655 164h1v1h-1zM655 170h1v1h-1zM665 166h1v1h-1zM665 168h1v1h-1zM664 165h1v1h-1zM664 169h1v1h-1zM663 164h1v1h-1zM663 170h1v1h-1zM673 166h1v1h-1zM673 168h1v1h-1zM672 165h1v1h-1zM672 169h1v1h-1zM671 164h1v1h-1zM671 170h1v1h-1zM681 166h1v1h-1zM681 168h1v1h-1zM680 165h1v1h-1zM680 169h1v1h-1zM679 164h1v1h-1zM679 170h1v1h-1zM689 166h1v1h-1zM689 168h1v1h-1zM688 165h1v1h-1zM688 169h1v1h-1zM687 164h1v1h-1zM687 170h1v1h-1zM697 166h1v1h-1zM697 168h1v1h-1zM696 165h1v1h-1zM696 169h1v1h-1zM695 164h1v1h-1zM695 170h1v1h-1zM705 166h1v1h-1zM705 168h1v1h-1zM704 165h1v1h-1zM704 169h1v1h-1zM703 164h1v1h-1zM703 170h1v1h-1zM713 166h1v1h-1zM713 168h1v1h-1zM712 165h1v1h-1zM712 169h1v1h-1zM711 164h1v1h-1zM711 170h1v1h-1zM721 166h1v1h-1zM721 168h1v1h-1zM720 165h1v1h-1zM720 169h1v1h-1zM719 164h1v1h-1zM719 170h1v1h-1zM729 166h1v1h-1zM729 168h1v1h-1zM728 165h1v1h-1zM728 169h1v1h-1zM727 164h1v1h-1zM727 170h1v1h-1zM737 166h1v1h-1zM737 168h1v1h-1zM736 165h1v1h-1zM736 169h1v1h-1zM735 164h1v1h-1zM735 170h1v1h-1zM745 166h1v1h-1zM745 168h1v1h-1zM744 165h1v1h-1zM744 169h1v1h-1zM743 164h1v1h-1zM743 170h1v1h-1zM753 166h1v1h-1zM753 168h1v1h-1zM752 165h1v1h-1zM752 169h1v1h-1zM751 164h1v1h-1zM751 170h1v1h-1zM761 166h1v1h-1zM761 168h1v1h-1zM760 165h1v1h-1zM760 169h1v1h-1zM759 164h1v1h-1zM759 170h1v1h-1zM769 166h1v1h-1zM769 168h1v1h-1zM768 165h1v1h-1zM768 169h1v1h-1zM767 164h1v1h-1zM767 170h1v1h-1zM777 166h1v1h-1zM777 168h1v1h-1zM776 165h1v1h-1zM776 169h1v1h-1zM775 164h1v1h-1zM775 170h1v1h-1zM785 166h1v1h-1zM785 168h1v1h-1zM784 165h1v1h-1zM784 169h1v1h-1zM783 164h1v1h-1zM783 170h1v1h-1zM793 166h1v1h-1zM793 168h1v1h-1zM792 165h1v1h-1zM792 169h1v1h-1zM791 164h1v1h-1zM791 170h1v1h-1zM801 166h1v1h-1zM801 168h1v1h-1zM800 165h1v1h-1zM800 169h1v1h-1zM799 164h1v1h-1zM799 170h1v1h-1zM809 166h1v1h-1zM809 168h1v1h-1zM808 165h1v1h-1zM808 169h1v1h-1zM807 164h1v1h-1zM807 170h1v1h-1zM817 166h1v1h-1zM817 168h1v1h-1zM816 165h1v1h-1zM816 169h1v1h-1zM815 164h1v1h-1zM815 170h1v1h-1zM825 166h1v1h-1zM825 168h1v1h-1zM824 165h1v1h-1zM824 169h1v1h-1zM823 164h1v1h-1zM823 170h1v1h-1zM833 166h1v1h-1zM833 168h1v1h-1zM832 165h1v1h-1zM832 169h1v1h-1zM831 164h1v1h-1zM831 170h1v1h-1zM841 166h1v1h-1zM841 168h1v1h-1zM840 165h1v1h-1zM840 169h1v1h-1zM839 164h1v1h-1zM839 170h1v1h-1zM849 166h1v1h-1zM849 168h1v1h-1zM848 165h1v1h-1zM848 169h1v1h-1zM847 164h1v1h-1zM847 170h1v1h-1zM857 166h1v1h-1zM857 168h1v1h-1zM856 165h1v1h-1zM856 169h1v1h-1zM855 164h1v1h-1zM855 170h1v1h-1zM865 166h1v1h-1zM865 168h1v1h-1zM864 165h1v1h-1zM864 169h1v1h-1zM863 164h1v1h-1zM863 170h1v1h-1zM873 166h1v1h-1zM873 168h1v1h-1zM872 165h1v1h-1zM872 169h1v1h-1zM871 164h1v1h-1zM871 170h1v1h-1zM881 166h1v1h-1zM881 168h1v1h-1zM880 165h1v1h-1zM880 169h1v1h-1zM879 164h1v1h-1zM879 170h1v1h-1zM889 166h1v1h-1zM889 168h1v1h-1zM888 165h1v1h-1zM888 169h1v1h-1zM887 164h1v1h-1zM887 170h1v1h-1zM897 166h1v1h-1zM897 168h1v1h-1zM896 165h1v1h-1zM896 169h1v1h-1zM895 164h1v1h-1zM895 170h1v1h-1zM905 166h1v1h-1zM905 168h1v1h-1zM904 165h1v1h-1zM904 169h1v1h-1zM903 164h1v1h-1zM903 170h1v1h-1zM913 166h1v1h-1zM913 168h1v1h-1zM912 165h1v1h-1zM912 169h1v1h-1zM911 164h1v1h-1zM911 170h1v1h-1zM921 166h1v1h-1zM921 168h1v1h-1zM920 165h1v1h-1zM920 169h1v1h-1zM919 164h1v1h-1zM919 170h1v1h-1zM929 166h1v1h-1zM929 168h1v1h-1zM928 165h1v1h-1zM928 169h1v1h-1zM927 164h1v1h-1zM927 170h1v1h-1zM937 166h1v1h-1zM937 168h1v1h-1zM936 165h1v1h-1zM936 169h1v1h-1zM935 164h1v1h-1zM935 170h1v1h-1zM945 166h1v1h-1zM945 168h1v1h-1zM944 165h1v1h-1zM944 169h1v1h-1zM943 164h1v1h-1zM943 170h1v1h-1z" fill="#1e78b4"/><rect x="157" y="183" width="792" height="1" fill="#0c0c78"/><path d="M161 182h1v1h-1zM161 184h1v1h-1zM160 181h1v1h-1zM160 185h1v1h-1zM159 180h1v1h-1zM159 186h1v1h-1zM169 182h1v1h-1zM169 184h1v1h-1zM168 181h1v1h-1zM168 185h1v1h-1zM167 180h1v1h-1zM167 186h1v1h-1zM177 182h1v1h-1zM177 184h1v1h-1zM176 181h1v1h-1zM176 185h1v1h-1zM175 180h1v1h-1zM175 186h1v1h-1zM185 182h1v1h-1zM185 184h1v1h-1zM184 181h1v1h-1zM184 185h1v1h-1zM183 180h1v1h-1zM183 186h1v1h-1zM193 182h1v1h-1zM193 184h1v1h-1zM192 181h1v1h-1zM192 185h1v1h-1zM191 180h1v1h-1zM191 186h1v1h-1zM201 182h1v1h-1zM201 184h1v1h-1zM200 181h1v1h-1zM200 185h1v1h-1zM199 180h1v1h-1zM199 186h1v1h-1zM209 182h1v1h-1zM209 184h1v1h-1zM208 181h1v1h-1zM208 185h1v1h-1zM207 180h1v1h-1zM207 186h1v1h-1zM217 182h1v1h-1zM217 184h1v1h-1zM216 181h1v1h-1zM216 185h1v1h-1zM215 180h1v1h-1zM215 186h1v1h-1zM225 182h1v1h-1zM225 184h1v1h-1zM224 181h1v1h-1zM224 185h1v1h-1zM223 180h1v1h-1zM223 186h1v1h-1zM233 182h1v1h-1zM233 184h1v1h-1zM232 181h1v1h-1zM232 185h1v1h-1zM231 180h1v1h-1zM231 186h1v1h-1zM241 182h1v1h-1zM241 184h1v1h-1zM240 181h1v1h-1zM240 185h1v1h-1zM239 180h1v1h-1zM239 186h1v1h-1zM249 182h1v1h-1zM249 184h1v1h-1zM248 181h1v1h-1zM248 185h1v1h-1zM247 180h1v1h-1zM247 186h1v1h-1zM257 182h1v1h-1zM257 184h1v1h-1zM256 181h1v1h-1zM256 185h1v1h-1zM255 180h1v1h-1zM255 186h1v1h-1zM265 182h1v1h-1zM265 184h1v1h-1zM264 181h1v1h-1zM264 185h1v1h-1zM263 180h1v1h-1zM263 186h1v1h-1zM273 182h1v1h-1zM273 184h1v1h-1zM272 181h1v1h-1zM272 185h1v1h-1zM271 180h1v1h-1zM271 186h1v1h-1zM281 182h1v1h-1zM281 184h1v1h-1zM280 181h1v1h-1zM280 185h1v1h-1zM279 180h1v1h-1zM279 186h1v1h-1zM289 182h1v1h-1zM289 184h1v1h-1zM288 181h1v1h-1zM288 185h1v1h-1zM287 180h1v1h-1zM287 186h1v1h-1zM297 182h1v1h-1zM297 184h1v1h-1zM296 181h1v1h-1zM296 185h1v1h-1zM295 180h1v1h-1zM295 186h1v1h-1zM305 182h1v1h-1zM305 184h1v1h-1zM304 181h1v1h-1zM304 185h1v1h-1zM303 180h1v1h-1zM303 186h1v1h-1zM313 182h1v1h-1zM313 184h1v1h-1zM312 181h1v1h-1zM312 185h1v1h-1zM311 180h1v1h-1zM311 186h1v1h-1zM321 182h1v1h-1zM321 184h1v1h-1zM320 181h1v1h-1zM320 185h1v1h-1zM319 180h1v1h-1zM319 186h1v1h-1zM329 182h1v1h-1zM329 184h1v1h-1zM328 181h1v1h-1zM328 185h1v1h-1zM327 180h1v1h-1zM327 186h1v1h-1zM337 182h1v1h-1zM337 184h1v1h-1zM336 181h1v1h-1zM336 185h1v1h-1zM335 180h1v1h-1zM335 186h1v1h-1zM345 182h1v1h-1zM345 184h1v1h-1zM344 181h1v1h-1zM344 185h1v1h-1zM343 180h1v1h-1zM343 186h1v1h-1zM353 182h1v1h-1zM353 184h1v1h-1zM352 181h1v1h-1zM352 185h1v1h-1zM351 180h1v1h-1zM351 186h1v1h-1zM361 182h1v1h-1zM361 184h1v1h-1zM360 181h1v1h-1zM360 185h1v1h-1zM359 180h1v1h-1zM359 186h1v1h-1zM369 182h1v1h-1zM369 184h1v1h-1zM368 181h1v1h-1zM368 185h1v1h-1zM367 180h1v1h-1zM367 186h1v1h-1zM377 182h1v1h-1zM377 184h1v1h-1zM376 181h1v1h-1zM376 185h1v1h-1zM375 180h1v1h-1zM375 186h1v1h-1zM385 182h1v1h-1zM385 184h1v1h-1zM384 181h1v1h-1zM384 185h1v1h-1zM383 180h1v1h-1zM383 186h1v1h-1zM393 182h1v1h-1zM393 184h1v1h-1zM392 181h1v1h-1zM392 185h1v1h-1zM391 180h1v1h-1zM391 186h1v1h-1zM401 182h1v1h-1zM401 184h1v1h-1zM400 181h1v1h-1zM400 185h1v1h-1zM399 180h1v1h-1zM399 186h1v1h-1zM409 182h1v1h-1zM409 184h1v1h-1zM408 181h1v1h-1zM408 185h1v1h-1zM407 180h1v1h-1zM407 186h1v1h-1zM417 182h1v1h-1zM417 184h1v1h-1zM416 181h1v1h-1zM416 185h1v1h-1zM415 180h1v1h-1zM415 186h1v1h-1zM425 182h1v1h-1zM425 184h1v1h-1zM424 181h1v1h-1zM424 185h1v1h-1zM423 180h1v1h-1zM423 186h1v1h-1zM433 182h1v1h-1zM433 184h1v1h-1zM432 181h1v1h-1zM432 185h1v1h-1zM431 180h1v1h-1zM431 186h1v1h-1zM441 182h1v1h-1zM441 184h1v1h-1zM440 181h1v1h-1zM440 185h1v1h-1zM439 180h1v1h-1zM439 186h1v1h-1zM449 182h1v1h-1zM449 184h1v1h-1zM448 181h1v1h-1zM448 185h1v1h-1zM447 180h1v1h-1zM447 186h1v1h-1zM457 182h1v1h-1zM457 184h1v1h-1zM456 181h1v1h-1zM456 185h1v1h-1zM455 180h1v1h-1zM455 186h1v1h-1zM465 182h1v1h-1zM465 184h1v1h-1zM464 181h1v1h-1zM464 185h1v1h-1zM463 180h1v1h-1zM463 186h1v1h-1zM473 182h1v1h-1zM473 184h1v1h-1zM472 181h1v1h-1zM472 185h1v1h-1zM471 180h1v1h-1zM471 186h1v1h-1zM481 182h1v1h-1zM481 184h1v1h-1zM480 181h1v1h-1zM480 185h1v1h-1zM479 180h1v1h-1zM479 186h1v1h-1zM489 182h1v1h-1zM489 184h1v1h-1zM488 181h1v1h-1zM488 185h1v1h-1zM487 180h1v1h-1zM487 186h1v1h-1zM497 182h1v1h-1zM497 184h1v1h-1zM496 181h1v1h-1zM496 185h1v1h-1zM495 180h1v1h-1zM495 186h1v1h-1zM505 182h1v1h-1zM505 184h1v1h-1zM504 181h1v1h-1zM504 185h1v1h-1zM503 180h1v1h-1zM503 186h1v1h-1zM513 182h1v1h-1zM513 184h1v1h-1zM512 181h1v1h-1zM512 185h1v1h-1zM511 180h1v1h-1zM511 186h1v1h-1zM521 182h1v1h-1zM521 184h1v1h-1zM520 181h1v1h-1zM520 185h1v1h-1zM519 180h1v1h-1zM519 186h1v1h-1zM529 182h1v1h-1zM529 184h1v1h-1zM528 181h1v1h-1zM528 185h1v1h-1zM527 180h1v1h-1zM527 186h1v1h-1zM537 182h1v1h-1zM537 184h1v1h-1zM536 181h1v1h-1zM536 185h1v1h-1zM535 180h1v1h-1zM535 186h1v1h-1zM545 182h1v1h-1zM545 184h1v1h-1zM544 181h1v1h-1zM544 185h1v1h-1zM543 180h1v1h-1zM543 186h1v1h-1zM553 182h1v1h-1zM553 184h1v1h-1zM552 181h1v1h-1zM552 185h1v1h-1zM551 180h1v1h-1zM551 186h1v1h-1zM561 182h1v1h-1zM561 184h1v1h-1zM560 181h1v1h-1zM560 185h1v1h-1zM559 180h1v1h-1zM559 186h1v1h-1zM569 182h1v1h-1zM569 184h1v1h-1zM568 181h1v1h-1zM568 185h1v1h-1zM567 180h1v1h-1zM567 186h1v1h-1zM577 182h1v1h-1zM577 184h1v1h-1zM576 181h1v1h-1zM576 185h1v1h-1zM575 180h1v1h-1zM575 186h1v1h-1zM585 182h1v1h-1zM585 184h1v1h-1zM584 181h1v1h-1zM584 185h1v1h-1zM583 180h1v1h-1zM583 186h1v1h-1zM593 182h1v1h-1zM593 184h1v1h-1zM592 181h1v1h-1zM592 185h1v1h-1zM591 180h1v1h-1zM591 186h1v1h-1zM601 182h1v1h-1zM601 184h1v1h-1zM600 181h1v1h-1zM600 185h1v1h-1zM599 180h1v1h-1zM599 186h1v1h-1zM609 182h1v1h-1zM609 184h1v1h-1zM608 181h1v1h-1zM608 185h1v1h-1zM607 180h1v1h-1zM607 186h1v1h-1zM617 182h1v1h-1zM617 184h1v1h-1zM616 181h1v1h-1zM616 185h1v1h-1zM615 180h1v1h-1zM615 186h1v1h-1zM625 182h1v1h-1zM625 184h1v1h-1zM624 181h1v1h-1zM624 185h1v1h-1zM623 180h1v1h-1zM623 186h1v1h-1zM633 182h1v1h-1zM633 184h1v1h-1zM632 181h1v1h-1zM632 185h1v1h-1zM631 180h1v1h-1zM631 186h1v1h-1zM641 182h1v1h-1zM641 184h1v1h-1zM640 181h1v1h-1zM640 185h1v1h-1zM639 180h1v1h-1zM639 186h1v1h-1zM649 182h1v1h-1zM649 184h1v1h-1zM648 181h1v1h-1zM648 185h1v1h-1zM647 180h1v1h-1zM647 186h1v1h-1zM657 182h1v1h-1zM657 184h1v1h-1zM656 181h1v1h-1zM656 185h1v1h-1zM655 180h1v1h-1zM655 186h1v1h-1zM665 182h1v1h-1zM665 184h1v1h-1zM664 181h1v1h-1zM664 185h1v1h-1zM663 180h1v1h-1zM663 186h1v1h-1zM673 182h1v1h-1zM673 184h1v1h-1zM672 181h1v1h-1zM672 185h1v1h-1zM671 180h1v1h-1zM671 186h1v1h-1zM681 182h1v1h-1zM681 184h1v1h-1zM680 181h1v1h-1zM680 185h1v1h-1zM679 180h1v1h-1zM679 186h1v1h-1zM689 182h1v1h-1zM689 184h1v1h-1zM688 181h1v1h-1zM688 185h1v1h-1zM687 180h1v1h-1zM687 186h1v1h-1zM697 182h1v1h-1zM697 184h1v1h-1zM696 181h1v1h-1zM696 185h1v1h-1zM695 180h1v1h-1zM695 186h1v1h-1zM705 182h1v1h-1zM705 184h1v1h-1zM704 181h1v1h-1zM704 185h1v1h-1zM703 180h1v1h-1zM703 186h1v1h-1zM713 182h1v1h-1zM713 184h1v1h-1zM712 181h1v1h-1zM712 185h1v1h-1zM711 180h1v1h-1zM711 186h1v1h-1zM721 182h1v1h-1zM721 184h1v1h-1zM720 181h1v1h-1zM720 185h1v1h-1zM719 180h1v1h-1zM719 186h1v1h-1zM729 182h1v1h-1zM729 184h1v1h-1zM728 181h1v1h-1zM728 185h1v1h-1zM727 180h1v1h-1zM727 186h1v1h-1zM737 182h1v1h-1zM737 184h1v1h-1zM736 181h1v1h-1zM736 185h1v1h-1zM735 180h1v1h-1zM735 186h1v1h-1zM745 182h1v1h-1zM745 184h1v1h-1zM744 181h1v1h-1zM744 185h1v1h-1zM743 180h1v1h-1zM743 186h1v1h-1zM753 182h1v1h-1zM753 184h1v1h-1zM752 181h1v1h-1zM752 185h1v1h-1zM751 180h1v1h-1zM751 186h1v1h-1zM761 182h1v1h-1zM761 184h1v1h-1zM760 181h1v1h-1zM760 185h1v1h-1zM759 180h1v1h-1zM759 186h1v1h-1zM769 182h1v1h-1zM769 184h1v1h-1zM768 181h1v1h-1zM768 185h1v1h-1zM767 180h1v1h-1zM767 186h1v1h-1zM777 182h1v1h-1zM777 184h1v1h-1zM776 181h1v1h-1zM776 185h1v1h-1zM775 180h1v1h-1zM775 186h1v1h-1zM785 182h1v1h-1zM785 184h1v1h-1zM784 181h1v1h-1zM784 185h1v1h-1zM783 180h1v1h-1zM783 186h1v1h-1zM793 182h1v1h-1zM793 184h1v1h-1zM792 181h1v1h-1zM792 185h1v1h-1zM791 180h1v1h-1zM791 186h1v1h-1zM801 182h1v1h-1zM801 184h1v1h-1zM800 181h1v1h-1zM800 185h1v1h-1zM799 180h1v1h-1zM799 186h1v1h-1zM809 182h1v1h-1zM809 184h1v1h-1zM808 181h1v1h-1zM808 185h1v1h-1zM807 180h1v1h-1zM807 186h1v1h-1zM817 182h1v1h-1zM817 184h1v1h-1zM816 181h1v1h-1zM816 185h1v1h-1zM815 180h1v1h-1zM815 186h1v1h-1zM825 182h1v1h-1zM825 184h1v1h-1zM824 181h1v1h-1zM824 185h1v1h-1zM823 180h1v1h-1zM823 186h1v1h-1zM833 182h1v1h-1zM833 184h1v1h-1zM832 181h1v1h-1zM832 185h1v1h-1zM831 180h1v1h-1zM831 186h1v1h-1zM841 182h1v1h-1zM841 184h1v1h-1zM840 181h1v1h-1zM840 185h1v1h-1zM839 180h1v1h-1zM839 186h1v1h-1zM849 182h1v1h-1zM849 184h1v1h-1zM848 181h1v1h-1zM848 185h1v1h-1zM847 180h1v1h-1zM847 186h1v1h-1zM857 182h1v1h-1zM857 184h1v1h-1zM856 181h1v1h-1zM856 185h1v1h-1zM855 180h1v1h-1zM855 186h1v1h-1zM865 182h1v1h-1zM865 184h1v1h-1zM864 181h1v1h-1zM864 185h1v1h-1zM863 180h1v1h-1zM863 186h1v1h-1zM873 182h1v1h-1zM873 184h1v1h-1zM872 181h1v1h-1zM872 185h1v1h-1zM871 180h1v1h-1zM871 186h1v1h-1zM881 182h1v1h-1zM881 184h1v1h-1zM880 181h1v1h-1zM880 185h1v1h-1zM879 180h1v1h-1zM879 186h1v1h-1zM889 182h1v1h-1zM889 184h1v1h-1zM888 181h1v1h-1zM888 185h1v1h-1zM887 180h1v1h-1zM887 186h1v1h-1zM897 182h1v1h-1zM897 184h1v1h-1zM896 181h1v1h-1zM896 185h1v1h-1zM895 180h1v1h-1zM895 186h1v1h-1zM905 182h1v1h-1zM905 184h1v1h-1zM904 181h1v1h-1zM904 185h1v1h-1zM903 180h1v1h-1zM903 186h1v1h-1zM913 182h1v1h-1zM913 184h1v1h-1zM912 181h1v1h-1zM912 185h1v1h-1zM911 180h1v1h-1zM911 186h1v1h-1zM921 182h1v1h-1zM921 184h1v1h-1zM920 181h1v1h-1zM920 185h1v1h-1zM919 180h1v1h-1zM919 186h1v1h-1zM929 182h1v1h-1zM929 184h1v1h-1zM928 181h1v1h-1zM928 185h1v1h-1zM927 180h1v1h-1zM927 186h1v1h-1zM937 182h1v1h-1zM937 184h1v1h-1zM936 181h1v1h-1zM936 185h1v1h-1zM935 180h1v1h-1zM935 186h1v1h-1zM945 182h1v1h-1zM945 184h1v1h-1zM944 181h1v1h-1zM944 185h1v1h-1zM943 180h1v1h-1zM943 186h1v1h-1z" fill="#0c0c78"/><rect x="157" y="214" width="792" height="1" fill="#0c0c78"/><rect x="156" y="285" width="793" height="15" fill="#bebebe"/></g>
<g shape-rendering="crispEdges"><rect x="156" y="348" width="378" height="59" fill="#f0f0f0"/><rect x="157" y="349" width="376" height="57" fill="#fff"/><rect x="156" y="354" width="5" height="52" fill="#FFA54F"/><rect x="163" y="356" width="5" height="50" fill="#EE9A00"/><rect x="170" y="372" width="5" height="34" fill="#8FBC8F"/><rect x="177" y="361" width="5" height="45" fill="#8B1C62"/><rect x="184" y="360" width="5" height="46" fill="#EE6A50"/><rect x="191" y="365" width="5" height="41" fill="#FF0000"/><rect x="198" y="364" width="5" height="42" fill="#CDB79E"/><rect x="205" y="388" width="5" height="18" fill="#EEEE00"/><rect x="212" y="390" width="5" height="16" fill="#EEEE00"/><rect x="219" y="387" width="5" height="19" fill="#EEEE00"/><rect x="226" y="372" width="5" height="34" fill="#EEEE00"/><rect x="233" y="374" width="5" height="32" fill="#EEEE00"/><rect x="240" y="391" width="5" height="15" fill="#EEEE00"/><rect x="247" y="390" width="5" height="16" fill="#EEEE00"/><rect x="254" y="389" width="5" height="17" fill="#EEEE00"/><rect x="261" y="384" width="5" height="22" fill="#EEEE00"/><rect x="268" y="387" width="5" height="19" fill="#EEEE00"/><rect x="275" y="389" width="5" height="17" fill="#EEEE00"/><rect x="282" y="379" width="5" height="27" fill="#EEEE00"/><rect x="289" y="382" width="5" height="24" fill="#EEEE00"/><rect x="296" y="357" width="5" height="49" fill="#00CDCD"/><rect x="303" y="389" width="5" height="17" fill="#EE82EE"/><rect x="310" y="348" width="5" height="58" fill="#9AC0CD"/><rect x="317" y="357" width="5" height="49" fill="#EED5D2"/><rect x="324" y="357" width="5" height="49" fill="#EED5D2"/><rect x="331" y="364" width="5" height="42" fill="#CDB79E"/><rect x="338" y="370" width="5" height="36" fill="#EEC591"/><rect x="345" y="366" width="5" height="40" fill="#8B7355"/><rect x="352" y="359" width="5" height="47" fill="#8B7355"/><rect x="359" y="367" width="5" height="39" fill="#CDAA7D"/><rect x="366" y="358" width="5" height="48" fill="#EED5D2"/><rect x="373" y="373" width="5" height="33" fill="#B452CD"/><rect x="380" y="378" width="5" height="28" fill="#7A378B"/><rect x="387" y="376" width="5" height="30" fill="#CDB79E"/><rect x="394" y="369" width="5" height="37" fill="#CDB79E"/><rect x="401" y="389" width="5" height="17" fill="#CDB79E"/><rect x="408" y="360" width="5" height="46" fill="#9ACD32"/><rect x="415" y="366" width="5" height="40" fill="#CDB79E"/><rect x="422" y="385" width="5" height="21" fill="#7A67EE"/><rect x="429" y="365" width="5" height="41" fill="#FFD700"/><rect x="436" y="370" width="5" height="36" fill="#FFB6C1"/><rect x="443" y="386" width="5" height="20" fill="#CD9B1D"/><rect x="450" y="376" width="5" height="30" fill="#B4EEB4"/><rect x="457" y="366" width="5" height="40" fill="#D9D9D9"/><rect x="464" y="372" width="5" height="34" fill="#3A5FCD"/><rect x="471" y="370" width="5" height="36" fill="#1E90FF"/><rect x="478" y="367" width="5" height="39" fill="#CDB79E"/><rect x="485" y="362" width="5" height="44" fill="#CDB79E"/><rect x="492" y="376" width="5" height="30" fill="#FFD39B"/><rect x="499" y="378" width="5" height="28" fill="#A6A6A6"/><rect x="506" y="357" width="5" height="49" fill="#008B45"/><rect x="513" y="355" width="5" height="51" fill="#EED5D2"/><rect x="520" y="356" width="5" height="50" fill="#EED5D2"/><rect x="527" y="382" width="5" height="24" fill="#FF00FF"/><rect x="156" y="407" width="793" height="2" fill="#00006e"/><rect x="156" y="448" width="582" height="1" fill="#e080ff"/><rect x="156" y="449" width="793" height="5" fill="#6a6aff"/><rect x="156" y="454" width="582" height="1" fill="#7030c0"/><rect x="738" y="454" width="211" height="1" fill="#3030f0"/><rect x="156" y="455" width="793" height="1" fill="#100020"/><rect x="264" y="493" width="38" height="1" fill="#90ff90"/><rect x="280" y="493" width="6" height="4" fill="#00ff00"/><rect x="634" y="496" width="38" height="1" fill="#e0ffe0"/><rect x="650" y="496" width="6" height="1" fill="#00ff00"/></g>
<path d="M370.30 496.80L387.50 492.30L394.50 492.30L411.00 496.80L405.50 496.95L395.30 493.85L386.70 493.85L375.80 496.95Z" fill="#ff0000"/>
<path d="M383.5 495.5H396.5" stroke="#ff4a4a" stroke-width="0.55" fill="none"/>
<path d="M899.40 496.90L916.20 492.70L923.80 492.70L940.40 496.90L934.90 497.05L924.60 494.25L915.40 494.25L904.90 497.05Z" fill="#ff0000"/>
<path d="M913.8 495.5H925.5" stroke="#ff4a4a" stroke-width="0.55" fill="none"/>
<g fill="none" stroke-linejoin="round" stroke-linecap="round"><path d="M424 496.5H432.5L434 495.5H453L454.5 496.5H463.5" stroke-width="0.75" stroke="#ff4a4a" stroke-opacity=".85"/><path d="M741 496.5H749.5L751 495.5H770L771.5 496.5H780.5" stroke-width="0.85" stroke="#ff3636" stroke-opacity=".85"/></g>
<g fill="none"><rect x="236" y="499" width="14.5" height="1.5" fill="#d4d4ff"/><path d="M213 499.5H219.6" stroke="#0000ff" stroke-width="1.3"/><path d="M219 498.7L224 498.4H247" stroke="#8a8aff" stroke-width="0.7"/><path d="M246.5 498.4L254 499" stroke="#0000ff" stroke-width="0.9"/><path d="M250.5 500.3H256.3" stroke="#0000ff" stroke-width="1.2"/><path d="M212 501.4H250.5" stroke="#ff6464" stroke-width="0.75"/></g>
<text transform="translate(179.6 565) scale(0.976 1.06)" class="c nv">T</text>
<text transform="translate(232.5 565) scale(0.976 1.06)" class="c nv">G</text>
<text transform="translate(285.4 565) scale(0.976 1.06)" class="c nv">T</text>
<text transform="translate(338.4 565) scale(0.976 1.06)" class="c nv">A</text>
<text transform="translate(391.3 565) scale(0.976 1.06)" class="c nv">A</text>
<text transform="translate(444.2 565) scale(0.976 1.06)" class="c nv">A</text>
<text transform="translate(497.2 565) scale(0.976 1.06)" class="c nv">G</text>
<text transform="translate(550.1 565) scale(0.976 1.06)" class="c nv">A</text>
<text transform="translate(603.0 565) scale(0.976 1.06)" class="c nv">G</text>
<text transform="translate(656.0 565) scale(0.976 1.06)" class="c nv">T</text>
<text transform="translate(708.9 565) scale(0.976 1.06)" class="c nv">A</text>
<text transform="translate(761.8 565) scale(0.976 1.06)" class="c nv">A</text>
<text transform="translate(814.8 565) scale(0.976 1.06)" class="c nv">G</text>
<text transform="translate(867.7 565) scale(0.976 1.06)" class="c nv">T</text>
<text transform="translate(920.6 565) scale(0.976 1.06)" class="c nv">A</text>
<text transform="translate(179.6 580) scale(0.976 1.06)" class="c nv">T</text>
<text transform="translate(232.5 580) scale(0.976 1.06)" class="c nv">G</text>
<text transform="translate(285.4 580) scale(0.976 1.06)" class="c nv">T</text>
<text transform="translate(338.4 580) scale(0.976 1.06)" class="c nv">A</text>
<text transform="translate(391.3 580) scale(0.976 1.06)" class="c nv">A</text>
<text transform="translate(444.2 580) scale(0.976 1.06)" class="c nv">A</text>
<text transform="translate(497.2 580) scale(0.976 1.06)" class="c nv">G</text>
<text transform="translate(550.1 580) scale(0.976 1.06)" class="c lt">G</text>
<text transform="translate(603.0 580) scale(0.976 1.06)" class="c nv">G</text>
<text transform="translate(656.0 580) scale(0.976 1.06)" class="c nv">T</text>
<text transform="translate(708.9 580) scale(0.976 1.06)" class="c nv">A</text>
<text transform="translate(761.8 580) scale(0.976 1.06)" class="c nv">A</text>
<text transform="translate(814.8 580) scale(0.976 1.06)" class="c lt">A</text>
<text transform="translate(867.7 580) scale(0.976 1.06)" class="c nv">T</text>
<text transform="translate(920.6 580) scale(0.976 1.06)" class="c nv">A</text>
<text transform="translate(179.6 595) scale(0.976 1.06)" class="c lt">C</text>
<text transform="translate(232.5 595) scale(0.976 1.06)" class="c lt">T</text>
<text transform="translate(285.4 595) scale(0.976 1.06)" class="c nv">T</text>
<text transform="translate(338.4 595) scale(0.976 1.06)" class="c nv">A</text>
<text transform="translate(391.3 595) scale(0.976 1.06)" class="c lt">G</text>
<text transform="translate(444.2 595) scale(0.976 1.06)" class="c nv">A</text>
<text transform="translate(497.2 595) scale(0.976 1.06)" class="c nv">G</text>
<text transform="translate(550.1 595) scale(0.976 1.06)" class="c lt">G</text>
<text transform="translate(603.0 595) scale(0.976 1.06)" class="c lt">A</text>
<text transform="translate(656.0 595) scale(0.976 1.06)" class="c nv">T</text>
<text transform="translate(708.9 595) scale(0.976 1.06)" class="c nv">A</text>
<text transform="translate(761.8 595) scale(0.976 1.06)" class="c nv">A</text>
<text transform="translate(814.8 595) scale(0.976 1.06)" class="c lt">A</text>
<text transform="translate(867.7 595) scale(0.976 1.06)" class="c nv">T</text>
<text transform="translate(920.6 595) scale(0.976 1.06)" class="c lt">C</text>
<text transform="translate(179.6 610) scale(0.976 1.06)" class="c nv">T</text>
<text transform="translate(232.5 610) scale(0.976 1.06)" class="c lt">A</text>
<text transform="translate(285.4 610) scale(0.976 1.06)" class="c nv">T</text>
<text transform="translate(338.4 610) scale(0.976 1.06)" class="c nv">A</text>
<text transform="translate(391.3 610) scale(0.976 1.06)" class="c nv">A</text>
<text transform="translate(444.2 610) scale(0.976 1.06)" class="c nv">A</text>
<text transform="translate(497.2 610) scale(0.976 1.06)" class="c nv">G</text>
<text transform="translate(550.1 610) scale(0.976 1.06)" class="c nv">A</text>
<text transform="translate(603.0 610) scale(0.976 1.06)" class="c nv">G</text>
<text transform="translate(656.0 610) scale(0.976 1.06)" class="c nv">T</text>
<text transform="translate(708.9 610) scale(0.976 1.06)" class="c nv">A</text>
<text transform="translate(761.8 610) scale(0.976 1.06)" class="c nv">A</text>
<text transform="translate(814.8 610) scale(0.976 1.06)" class="c lt">C</text>
<text transform="translate(867.7 610) scale(0.976 1.06)" class="c nv">T</text>
<text transform="translate(920.6 610) scale(0.976 1.06)" class="c nv">A</text>
<text transform="translate(179.3 625.9) scale(0.988 0.8)" class="c eq">=</text>
<text transform="translate(232.2 625.9) scale(0.988 0.8)" class="c eq">=</text>
<text transform="translate(285.4 625) scale(0.976 1.06)" class="c nv">T</text>
<text transform="translate(338.4 625) scale(0.976 1.06)" class="c nv">A</text>
<text transform="translate(391.3 625) scale(0.976 1.06)" class="c nv">A</text>
<text transform="translate(444.2 625) scale(0.976 1.06)" class="c lt">T</text>
<text transform="translate(497.2 625) scale(0.976 1.06)" class="c nv">G</text>
<text transform="translate(550.1 625) scale(0.976 1.06)" class="c lt">G</text>
<text transform="translate(603.0 625) scale(0.976 1.06)" class="c nv">G</text>
<text transform="translate(656.0 625) scale(0.976 1.06)" class="c nv">T</text>
<text transform="translate(708.9 625) scale(0.976 1.06)" class="c nv">A</text>
<text transform="translate(761.8 625) scale(0.976 1.06)" class="c nv">A</text>
<text transform="translate(814.8 625) scale(0.976 1.06)" class="c lt">A</text>
<text transform="translate(867.7 625) scale(0.976 1.06)" class="c nv">T</text>
<text transform="translate(920.6 625) scale(0.976 1.06)" class="c nv">A</text>
<text transform="translate(179.3 640.9) scale(0.988 0.8)" class="c eq">=</text>
<text transform="translate(232.2 640.9) scale(0.988 0.8)" class="c eq">=</text>
<text transform="translate(285.1 640.9) scale(0.988 0.8)" class="c eq">=</text>
<text transform="translate(338.1 640.9) scale(0.988 0.8)" class="c eq">=</text>
<text transform="translate(391.0 640.9) scale(0.988 0.8)" class="c eq">=</text>
<text transform="translate(443.9 640.9) scale(0.988 0.8)" class="c eq">=</text>
<text transform="translate(496.9 640.9) scale(0.988 0.8)" class="c eq">=</text>
<text transform="translate(549.8 640.9) scale(0.988 0.8)" class="c eq">=</text>
<text transform="translate(602.7 640.9) scale(0.988 0.8)" class="c eq">=</text>
<text transform="translate(655.7 640.9) scale(0.988 0.8)" class="c eq">=</text>
<text transform="translate(708.6 640.9) scale(0.988 0.8)" class="c eq">=</text>
<text transform="translate(761.5 640.9) scale(0.988 0.8)" class="c eq">=</text>
<text transform="translate(814.5 640.9) scale(0.988 0.8)" class="c eq">=</text>
<text transform="translate(867.4 640.9) scale(0.988 0.8)" class="c eq">=</text>
<text transform="translate(920.3 640.9) scale(0.988 0.8)" class="c eq">=</text>
<text transform="translate(179.3 655.9) scale(0.988 0.8)" class="c eq">=</text>
<text transform="translate(232.2 655.9) scale(0.988 0.8)" class="c eq">=</text>
<text transform="translate(285.1 655.9) scale(0.988 0.8)" class="c eq">=</text>
<text transform="translate(338.1 655.9) scale(0.988 0.8)" class="c eq">=</text>
<text transform="translate(391.0 655.9) scale(0.988 0.8)" class="c eq">=</text>
<text transform="translate(443.9 655.9) scale(0.988 0.8)" class="c eq">=</text>
<text transform="translate(496.9 655.9) scale(0.988 0.8)" class="c eq">=</text>
<text transform="translate(549.8 655.9) scale(0.988 0.8)" class="c eq">=</text>
<text transform="translate(602.7 655.9) scale(0.988 0.8)" class="c eq">=</text>
<text transform="translate(655.7 655.9) scale(0.988 0.8)" class="c eq">=</text>
<text transform="translate(708.6 655.9) scale(0.988 0.8)" class="c eq">=</text>
<text transform="translate(761.5 655.9) scale(0.988 0.8)" class="c eq">=</text>
<text transform="translate(814.5 655.9) scale(0.988 0.8)" class="c eq">=</text>
<text transform="translate(867.4 655.9) scale(0.988 0.8)" class="c eq">=</text>
<text transform="translate(920.3 655.9) scale(0.988 0.8)" class="c eq">=</text>
<text transform="translate(179.3 670.9) scale(0.988 0.8)" class="c eq">=</text>
<text transform="translate(232.2 670.9) scale(0.988 0.8)" class="c eq">=</text>
<text transform="translate(285.1 670.9) scale(0.988 0.8)" class="c eq">=</text>
<text transform="translate(338.1 670.9) scale(0.988 0.8)" class="c eq">=</text>
<text transform="translate(391.0 670.9) scale(0.988 0.8)" class="c eq">=</text>
<text transform="translate(443.9 670.9) scale(0.988 0.8)" class="c eq">=</text>
<text transform="translate(496.9 670.9) scale(0.988 0.8)" class="c eq">=</text>
<text transform="translate(549.8 670.9) scale(0.988 0.8)" class="c eq">=</text>
<text transform="translate(602.7 670.9) scale(0.988 0.8)" class="c eq">=</text>
<text transform="translate(655.7 670.9) scale(0.988 0.8)" class="c eq">=</text>
<text transform="translate(708.6 670.9) scale(0.988 0.8)" class="c eq">=</text>
<text transform="translate(761.5 670.9) scale(0.988 0.8)" class="c eq">=</text>
<text transform="translate(814.5 670.9) scale(0.988 0.8)" class="c eq">=</text>
<text transform="translate(867.4 670.9) scale(0.988 0.8)" class="c eq">=</text>
<text transform="translate(920.3 670.9) scale(0.988 0.8)" class="c eq">=</text>
</svg></body></html>
